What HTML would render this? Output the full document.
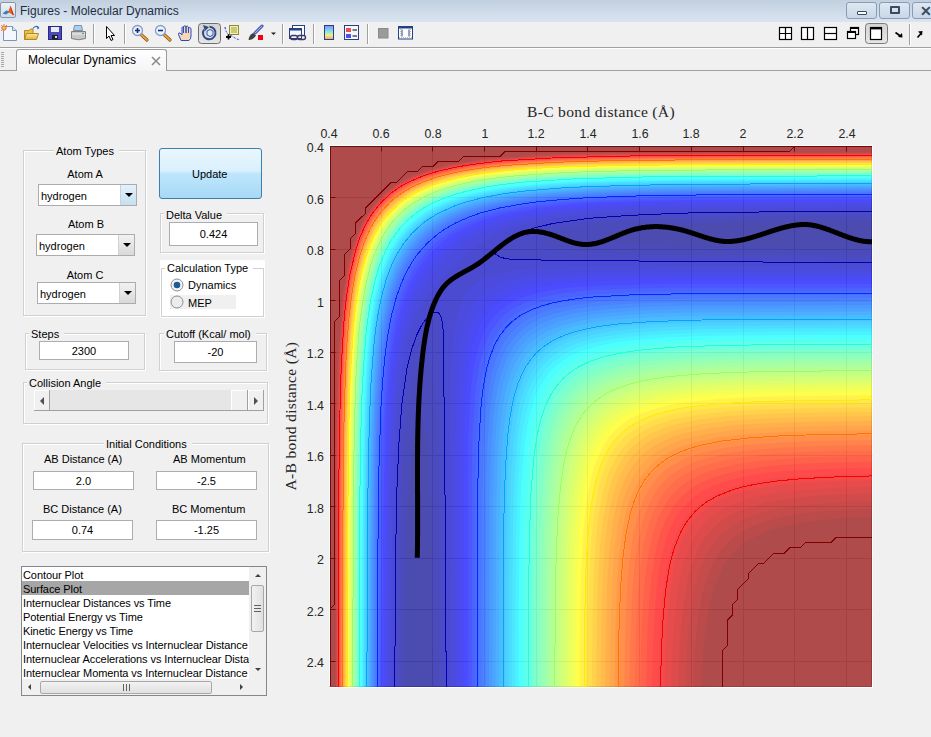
<!DOCTYPE html>
<html><head><meta charset="utf-8">
<style>
*{box-sizing:border-box}
html,body{margin:0;padding:0}
body{width:931px;height:737px;overflow:hidden;background:#f0f0f0;position:relative;font-family:"Liberation Sans",sans-serif;color:#000}
.a{position:absolute}
#title{left:0;top:0;width:931px;height:22px;background:linear-gradient(#c2cfde,#dae5f2)}
#title .t{left:20px;top:4px;font-size:12px;color:#1e2d44;white-space:nowrap}
.wb{position:absolute;top:2px;height:17px;border:1px solid #8a9bb3;border-radius:3px;background:linear-gradient(#dfe8f3,#c8d6e7)}
#tb{left:0;top:22px;width:931px;height:25px;background:#f0f0f0}
.sep{position:absolute;top:24px;width:1px;height:20px;background:#a0a0a0;box-shadow:1px 0 0 #fff}
#tabline1{left:0;top:47px;width:931px;height:1px;background:#a0a0a0}
#tabline1b{left:0;top:48px;width:931px;height:1px;background:#fff}
#tabline2{left:0;top:70px;width:931px;height:1px;background:#a0a0a0}
#tab{left:16px;top:49px;width:151px;height:22px;border:1px solid #9a9a9a;border-bottom:none;border-radius:3px 3px 0 0;background:linear-gradient(#fff,#f4f4f4)}
#tab .t{left:11px;top:3px;font-size:12px}
.lbl{position:absolute;font-size:11px;white-space:nowrap;line-height:13px;margin-top:1px}
.panel{position:absolute;border:1px solid #d0d0d0;box-shadow:inset 1px 1px 0 #fff,1px 1px 0 #fff}
.ptitle{position:absolute;font-size:11px;line-height:13px;background:#f0f0f0;padding:0 5px 0 2px;white-space:nowrap;margin-top:1px}
.edit{position:absolute;background:#fff;border:1px solid #abadb3;font-size:11px;text-align:center;line-height:19px}
.popup{position:absolute;background:#fff;border:1px solid #acacac;font-size:11px;line-height:22px;padding-left:2px}
.popup .btn{position:absolute;right:0;top:0;width:16px;height:100%;background:linear-gradient(#f2f2f2,#d9d9d9);border-left:1px solid #d0d0d0}
.popup .btn:after{content:"";position:absolute;left:4px;top:8px;border-left:4px solid transparent;border-right:4px solid transparent;border-top:4px solid #000}
.tick{position:absolute;font-size:12.4px;color:#262626;white-space:nowrap;line-height:14px}
</style></head><body>
<!-- title bar -->
<div id="title" class="a">
 <div class="a" style="left:0px;top:2px;width:16px;height:16px;border:1px solid #8796a8;border-radius:2px;background:linear-gradient(#eef3f8,#cfdbe8)"></div>
 <svg class="a" style="left:1px;top:4px" width="14" height="13" viewBox="0 0 14 13"><path d="M2 9.5 L5.5 6.5 L7.5 7 L9.5 1.5 L13 11.5 L10.5 10 L8 8.5 Z" fill="#e8601c"/><path d="M9.5 1.5 L13 11.5 L11 10 Z" fill="#b8321a"/><path d="M1.5 9.5 L5.5 6.5 L8 8.5 L5 10.5 Z" fill="#2f7fcf"/></svg>
 <div class="t a">Figures - Molecular Dynamics</div>
 <div class="wb" style="left:846px;width:31px"><div class="a" style="left:10px;top:8px;width:10px;height:4px;border:1px solid #3a4a60;background:#fff;border-radius:1px"></div></div>
 <div class="wb" style="left:879px;width:31px"><div class="a" style="left:10px;top:3px;width:10px;height:8px;border:2px solid #3a4a60;border-radius:1px"></div></div>
 <div class="wb" style="left:912px;width:31px"><div class="a" style="left:7px;top:0px;font-size:14px;font-weight:bold;color:#3a4a60">&#x2715;</div></div>
</div>
<div id="tb" class="a"></div>
<svg class="a" style="left:0;top:22px" width="931" height="25" viewBox="0 22 931 25">
<defs>
<linearGradient id="gFold" x1="0" y1="0" x2="0" y2="1"><stop offset="0" stop-color="#ffe89a"/><stop offset="1" stop-color="#e0b23a"/></linearGradient>
<linearGradient id="gCb" x1="0" y1="0" x2="0" y2="1"><stop offset="0" stop-color="#8a8af0"/><stop offset="0.4" stop-color="#7fe0f0"/><stop offset="0.7" stop-color="#f0f080"/><stop offset="1" stop-color="#f0a070"/></linearGradient>
<linearGradient id="gPress" x1="0" y1="0" x2="0" y2="1"><stop offset="0" stop-color="#d4d4d4"/><stop offset="1" stop-color="#e6e6e6"/></linearGradient>
</defs>
<!-- new -->
<path d="M3.5 26.5H12.5L16.5 30.5V40.5H3.5Z" fill="#f4f8fd" stroke="#7d92c0"/>
<path d="M12.5 26.5V30.5H16.5" fill="#dfe6f3" stroke="#7d92c0"/>
<circle cx="4" cy="28" r="2.2" fill="#f3c24a" stroke="#e8643a" stroke-width="1"/>
<path d="M1 25L2 26M7 25L6 26M1 31L2 30M4 24V25" stroke="#e8643a" stroke-width="0.8"/>
<!-- open -->
<path d="M24.5 30.5H29L30.5 29H33V39.5H24.5Z" fill="#e8c04a" stroke="#b08a20"/>
<path d="M24.5 39.5L26.5 33.5H38.5L36.5 39.5Z" fill="url(#gFold)" stroke="#b08a20"/>
<path d="M33 28.5Q35.5 25 38.5 27.5" fill="none" stroke="#3a66b0" stroke-width="1.2"/>
<path d="M37 26L39.5 28L37.5 29.5Z" fill="#3a66b0"/>
<!-- save -->
<rect x="48.5" y="26.5" width="13" height="13" fill="#4a4ab8" stroke="#2a2a80"/>
<rect x="51" y="27" width="8" height="5" fill="#e8ecf8"/>
<rect x="52" y="35" width="6" height="4.5" fill="#202020"/>
<rect x="55" y="36" width="2" height="2" fill="#ddd"/>
<!-- print -->
<path d="M74.5 25.5H81.5L82.5 30.5H73.5Z" fill="#a8d0f4" stroke="#8090a0"/>
<path d="M71.5 31.5H85.5V38.5Q78.5 41 71.5 38.5Z" fill="#c8c8c8" stroke="#808080"/>
<path d="M72 34H85" stroke="#f0f0f0"/>
<rect x="82" y="33" width="2" height="1" fill="#40b040"/>
<!-- sep -->
<rect x="93" y="24" width="1" height="20" fill="#a0a0a0"/><rect x="94" y="24" width="1" height="20" fill="#fff"/>
<!-- pointer -->
<path d="M106.5 26.5V38.5L109 36L111 40.5L113 39.5L111 35.5H114.5Z" fill="#fff" stroke="#000" stroke-linejoin="round"/>
<rect x="124" y="24" width="1" height="20" fill="#a0a0a0"/><rect x="125" y="24" width="1" height="20" fill="#fff"/>
<!-- zoom in/out -->
<path d="M141 34.5L147 40" stroke="#7a5020" stroke-width="3.2" stroke-linecap="round"/>
<path d="M141 34.5L147 40" stroke="#f0a030" stroke-width="1.8" stroke-linecap="round"/>
<circle cx="137.5" cy="30.5" r="5" fill="#e6f4fc" stroke="#8a9ad0" stroke-width="1.3"/>
<path d="M135 30.5H140M137.5 28V33" stroke="#1a2a70" stroke-width="1.6"/>
<path d="M164 34.5L170 40" stroke="#7a5020" stroke-width="3.2" stroke-linecap="round"/>
<path d="M164 34.5L170 40" stroke="#f0a030" stroke-width="1.8" stroke-linecap="round"/>
<circle cx="160.5" cy="30.5" r="5" fill="#e6f4fc" stroke="#8a9ad0" stroke-width="1.3"/>
<path d="M158 30.5H163" stroke="#1a2a70" stroke-width="1.6"/>
<!-- hand -->
<path d="M181 40.5L178.5 34.5Q178 32.5 180 33L182 35V28Q182 26.5 183.5 27V33V26.5Q185 25 186 26.5V33V26.5Q187.5 25.5 188.5 27V33V28Q190 27 191 28.5V36Q191 39 189 40.5Z" fill="#f6d8b8" stroke="#2a4ac0" stroke-width="1" stroke-linejoin="round"/>
<!-- rotate pressed -->
<rect x="198.5" y="23.5" width="22" height="20" rx="3" fill="url(#gPress)" stroke="#6e6e6e"/>
<path d="M204 29.5A6.3 6.3 0 1 0 209.5 26.7" fill="none" stroke="#2a4a8a" stroke-width="2"/>
<path d="M203 25L209 27L205 31Z" fill="#2a4a8a"/>
<path d="M207 31L210 29.5L213 31V35L210 36.5L207 35Z" fill="#e0e8f8" stroke="#2a4a8a" stroke-width="0.9"/>
<!-- datacursor -->
<rect x="229.5" y="25.5" width="9" height="9" fill="#f4f0a0" stroke="#8a8a40"/>
<path d="M231 28H237M231 30H237M231 32H237" stroke="#8a8a40" stroke-width="0.8"/>
<path d="M225 27Q226 35 232 36Q236 39 240 40" fill="none" stroke="#2020e0" stroke-dasharray="2 1.5"/>
<path d="M226 37H231M228.5 34.5V39.5" stroke="#000" stroke-width="1.8"/>
<!-- brush -->
<path d="M255 33L262 26" stroke="#2a3a9a" stroke-width="3" stroke-linecap="round"/>
<path d="M255 33L262 26" stroke="#90b0f0" stroke-width="1.2" stroke-linecap="round"/>
<path d="M248.5 40Q249 35 253 33L256 35.5Q253 40 248.5 40Z" fill="#404040"/>
<rect x="258" y="35" width="5" height="5" fill="#f00010"/>
<path d="M271 32.5H276L273.5 35Z" fill="#202020"/>
<rect x="282" y="24" width="1" height="20" fill="#a0a0a0"/><rect x="283" y="24" width="1" height="20" fill="#fff"/>
<!-- link -->
<rect x="292.5" y="25.5" width="12" height="10" fill="#fff" stroke="#24408a"/>
<rect x="289.5" y="28.5" width="12" height="10" fill="#f4f6fa" stroke="#24408a"/>
<rect x="290" y="28.5" width="11" height="2" fill="#24408a"/>
<rect x="290.5" y="35.5" width="7" height="4" rx="2" fill="none" stroke="#3a3a60" stroke-width="1.4"/>
<rect x="297.5" y="35.5" width="8" height="4" rx="2" fill="none" stroke="#3a3a60" stroke-width="1.4"/>
<rect x="313" y="24" width="1" height="20" fill="#a0a0a0"/><rect x="314" y="24" width="1" height="20" fill="#fff"/>
<!-- colorbar -->
<rect x="324.5" y="25.5" width="9" height="14" fill="url(#gCb)" stroke="#24408a"/>
<!-- legend -->
<rect x="344.5" y="25.5" width="14" height="14" fill="#f4f6fa" stroke="#24408a"/>
<rect x="346" y="28" width="5" height="4" fill="#e85050"/><rect x="346" y="34" width="5" height="4" fill="#5050e8"/>
<path d="M352.5 30H357M352.5 36H357" stroke="#000" stroke-width="1.2"/>
<rect x="367" y="24" width="1" height="20" fill="#a0a0a0"/><rect x="368" y="24" width="1" height="20" fill="#fff"/>
<!-- grey sq -->
<rect x="378.5" y="28.5" width="9.5" height="9.5" fill="#9a9a9a" stroke="#8a8a8a"/>
<!-- plot tools -->
<rect x="398.5" y="26.5" width="14" height="12.5" fill="#fff" stroke="#24408a"/>
<rect x="399" y="26.5" width="13" height="2" fill="#24408a"/>
<path d="M400.5 29V37M410.5 29V37M399 37.5H412" stroke="#c8c0a0" stroke-dasharray="1 1"/>
<path d="M402 29.5V36.5M409 29.5V36.5" stroke="#24408a"/>
<!-- right side -->
<g fill="#fff" stroke="#000" stroke-width="1.2">
<rect x="779.5" y="27.5" width="12" height="12"/><path d="M785.5 27.5V39.5M779.5 33.5H791.5"/>
<rect x="801.5" y="27.5" width="12" height="12"/><path d="M807.5 27.5V39.5"/>
<rect x="824.5" y="27.5" width="12" height="12"/><path d="M824.5 33.5H836.5"/>
<rect x="850.5" y="27.5" width="8" height="7"/><rect x="847.5" y="31.5" width="8" height="7"/>
</g>
<rect x="850" y="27" width="9" height="2" fill="#000"/><rect x="847" y="31" width="9" height="2" fill="#000"/>
<rect x="865.5" y="23.5" width="22" height="20" rx="3" fill="url(#gPress)" stroke="#7a7a7a"/>
<rect x="870.5" y="27.5" width="11" height="12" fill="#fff" stroke="#000" stroke-width="1.2"/>
<rect x="870" y="27" width="12" height="2.4" fill="#000"/>
<path d="M895.5 32.5L901 36.5" fill="none" stroke="#000" stroke-width="1.6"/><path d="M902.5 37.5L902 33L898 37Z" fill="#000"/>
<rect x="909" y="24" width="1" height="21" fill="#a0a0a0"/><rect x="910" y="24" width="1" height="21" fill="#fff"/>
<path d="M917.5 37.5L921 33.5" fill="none" stroke="#000" stroke-width="1.6"/><path d="M922.5 31L918 31.5L922 35.5Z" fill="#000"/>
</svg>

<div id="tabline1" class="a"></div>
<div id="tabline1b" class="a"></div>
<div id="tabline2" class="a"></div>
<div id="tab" class="a"><div class="t a">Molecular Dynamics</div><svg class="a" style="left:134px;top:6px" width="10" height="10"><path d="M1 1L9 9M9 1L1 9" stroke="#8c8c8c" stroke-width="1.6"/></svg></div>
<div class="a" style="left:1px;top:52px;width:3px;height:16px;background:repeating-linear-gradient(#a8a8a8 0 1px,transparent 1px 2px)"></div>

<!-- Left UI -->
<div class="panel" style="left:23px;top:150px;width:123px;height:166px"></div>
<div class="ptitle" style="left:54px;top:144px">Atom Types</div>
<div class="lbl" style="left:45px;width:80px;text-align:center;top:167px">Atom A</div>
<div class="popup" style="left:38px;top:184px;width:99px;height:22px">hydrogen<div class="btn" style="background:linear-gradient(#e5f1fb,#c4e0f2)"></div></div>
<div class="lbl" style="left:46px;width:80px;text-align:center;top:217px">Atom B</div>
<div class="popup" style="left:36px;top:234px;width:99px;height:22px">hydrogen<div class="btn"></div></div>
<div class="lbl" style="left:45px;width:80px;text-align:center;top:268px">Atom C</div>
<div class="popup" style="left:37px;top:282px;width:99px;height:22px">hydrogen<div class="btn"></div></div>

<div class="a" style="left:159px;top:148px;width:103px;height:51px;border:1px solid #3c7fb1;border-radius:3px;background:linear-gradient(#eaf6fd 0%,#d9f0fc 45%,#bee6fd 50%,#a7d9f5 100%)"></div>
<div class="lbl" style="left:192px;top:167px">Update</div>

<div class="panel" style="left:160px;top:213px;width:104px;height:40px"></div>
<div class="ptitle" style="left:164px;top:208px">Delta Value</div>
<div class="edit" style="left:169px;top:222px;width:89px;height:24px;line-height:23px">0.424</div>

<div class="a" style="left:160px;top:260px;width:105px;height:58px;background:#fff"></div>
<div class="panel" style="left:161px;top:268px;width:103px;height:49px;background:#fff"></div>
<div class="ptitle" style="left:165px;top:261px;background:#fff">Calculation Type</div>
<div class="a" style="left:170px;top:295px;width:66px;height:14px;background:#f0f0f0"></div>
<svg class="a" style="left:170px;top:278px" width="14" height="14"><circle cx="7" cy="7" r="6" fill="#f4f4f4" stroke="#8e8f8f"/><circle cx="7" cy="7" r="3.3" fill="#1d5a9a"/></svg>
<div class="lbl" style="left:188px;top:278px">Dynamics</div>
<svg class="a" style="left:170px;top:295px" width="14" height="14"><circle cx="7" cy="7" r="6" fill="#ececec" stroke="#8e8f8f"/></svg>
<div class="lbl" style="left:188px;top:296px">MEP</div>

<div class="panel" style="left:25px;top:333px;width:120px;height:37px"></div>
<div class="ptitle" style="left:29px;top:327px">Steps</div>
<div class="edit" style="left:39px;top:341px;width:90px;height:19px">2300</div>
<div class="panel" style="left:159px;top:333px;width:108px;height:38px"></div>
<div class="ptitle" style="left:164px;top:327px">Cutoff (Kcal/ mol)</div>
<div class="edit" style="left:174px;top:341px;width:83px;height:22px;line-height:21px">-20</div>

<div class="panel" style="left:23px;top:382px;width:245px;height:42px"></div>
<div class="ptitle" style="left:27px;top:376px">Collision Angle</div>
<div class="a" style="left:34px;top:390px;width:230px;height:21px;background:#e6e6e6;border-bottom:1px solid #a0a0a0"></div>
<div class="a" style="left:34px;top:390px;width:16px;height:21px;background:#f0f0f0;border-right:1px solid #a0a0a0;border-bottom:1px solid #a0a0a0;box-shadow:inset 1px 1px 0 #fff"></div>
<div class="a" style="left:231px;top:390px;width:17px;height:21px;background:#f0f0f0;border-bottom:1px solid #a0a0a0;border-right:1px solid #a0a0a0;box-shadow:inset 1px 1px 0 #fff"></div>
<div class="a" style="left:248px;top:390px;width:16px;height:21px;background:#f0f0f0;border-right:1px solid #a0a0a0;border-bottom:1px solid #a0a0a0;box-shadow:inset 1px 1px 0 #fff"></div>
<div class="a" style="left:40px;top:397px;border-top:4px solid transparent;border-bottom:4px solid transparent;border-right:4px solid #505050"></div>
<div class="a" style="left:254px;top:397px;border-top:4px solid transparent;border-bottom:4px solid transparent;border-left:4px solid #505050"></div>

<div class="panel" style="left:22px;top:443px;width:247px;height:109px"></div>
<div class="ptitle" style="left:104px;top:437px">Initial Conditions</div>
<div class="lbl" style="left:44px;top:452px">AB Distance (A)</div>
<div class="lbl" style="left:173px;top:452px">AB Momentum</div>
<div class="edit" style="left:33px;top:471px;width:101px;height:19px">2.0</div>
<div class="edit" style="left:156px;top:471px;width:101px;height:19px">-2.5</div>
<div class="lbl" style="left:43px;top:502px">BC Distance (A)</div>
<div class="lbl" style="left:172px;top:502px">BC Momentum</div>
<div class="edit" style="left:32px;top:520px;width:101px;height:20px">0.74</div>
<div class="edit" style="left:156px;top:520px;width:101px;height:20px">-1.25</div>

<div class="a" style="left:21px;top:566px;width:246px;height:130px;background:#fff;border:1px solid #828790"></div>
<div class="a" style="left:22px;top:581px;width:227px;height:14px;background:#a6a6a6"></div>
<div class="lbl" style="left:23px;top:567px;line-height:14px;width:226px;height:112px;overflow:hidden;letter-spacing:-0.08px">Contour Plot<br>Surface Plot<br>Internuclear Distances vs Time<br>Potential Energy vs Time<br>Kinetic Energy vs Time<br>Internuclear Velocities vs Internuclear Distance<br>Internuclear Accelerations vs Internuclear Distance<br>Internuclear Momenta vs Internuclear Distance</div>
<div class="a" style="left:249px;top:567px;width:17px;height:112px;background:#f0f0f0"></div>
<div class="a" style="left:22px;top:679px;width:244px;height:16px;background:#f0f0f0"></div>
<div class="a" style="left:251px;top:585px;width:13px;height:47px;border:1px solid #a8a8a8;border-radius:2px;background:linear-gradient(90deg,#f2f2f2,#e0e0e0)"></div>
<div class="a" style="left:254px;top:605px;width:7px;height:7px;border-top:1px solid #606060;border-bottom:1px solid #606060"></div>
<div class="a" style="left:254px;top:608px;width:7px;height:1px;background:#606060"></div>
<div class="a" style="left:255px;top:574px;border-left:3px solid transparent;border-right:3px solid transparent;border-bottom:3px solid #404040"></div>
<div class="a" style="left:255px;top:668px;border-left:3px solid transparent;border-right:3px solid transparent;border-top:3px solid #404040"></div>
<div class="a" style="left:40px;top:681px;width:172px;height:13px;border:1px solid #a8a8a8;border-radius:2px;background:linear-gradient(#f2f2f2,#e0e0e0)"></div>
<div class="a" style="left:123px;top:684px;width:7px;height:7px;border-left:1px solid #606060;border-right:1px solid #606060"></div>
<div class="a" style="left:126px;top:684px;width:1px;height:7px;background:#606060"></div>
<div class="a" style="left:28px;top:684px;border-top:3px solid transparent;border-bottom:3px solid transparent;border-right:3px solid #404040"></div>
<div class="a" style="left:240px;top:684px;border-top:3px solid transparent;border-bottom:3px solid transparent;border-left:3px solid #404040"></div>

<!-- plot -->
<svg class="a" style="left:0;top:0" width="931" height="737">
<rect x="329" y="145" width="544" height="543" fill="#fff"/><path d="M330.5 146.20V686.95M329.36 146.5H872.36M381.5 146.20V686.95M329.36 197.5H872.36M432.5 146.20V686.95M329.36 249.5H872.36M484.5 146.20V686.95M329.36 300.5H872.36M536.5 146.20V686.95M329.36 352.5H872.36M587.5 146.20V686.95M329.36 403.5H872.36M639.5 146.20V686.95M329.36 455.5H872.36M691.5 146.20V686.95M329.36 506.5H872.36M743.5 146.20V686.95M329.36 558.5H872.36M794.5 146.20V686.95M329.36 609.5H872.36M846.5 146.20V686.95M329.36 661.5H872.36" stroke="#d9d9d9" stroke-width="1" fill="none"/><path d="M330.5 146V151.5M330 146.5H335.5M381.5 146V151.5M330 197.5H335.5M432.5 146V151.5M330 249.5H335.5M484.5 146V151.5M330 300.5H335.5M536.5 146V151.5M330 352.5H335.5M587.5 146V151.5M330 403.5H335.5M639.5 146V151.5M330 455.5H335.5M691.5 146V151.5M330 506.5H335.5M743.5 146V151.5M330 558.5H335.5M794.5 146V151.5M330 609.5H335.5M846.5 146V151.5M330 661.5H335.5" stroke="#262626" stroke-width="1" fill="none"/><path d="M330.5 687V146.5H872" fill="none" stroke="#262626"/><path d="M871.5 146.5V686.5H329" fill="none" stroke="#bbbbbb"/>
<defs><clipPath id="pc"><rect x="330" y="146" width="542" height="541"/></clipPath></defs>
<g clip-path="url(#pc)">
<g opacity="0.70"><rect x="329.36" y="146.20" width="543.00" height="540.75" fill="#8f0000"/><path d="M515.5,154.9 520.7,153.8 531.0,152.9 567.2,152.2 872.4,151.8 872.4,525.1 846.5,526.6 825.8,528.6 805.1,531.6 789.6,535.0 774.1,539.9 763.8,544.4 753.4,550.6 743.1,559.3 735.5,568.5 729.2,578.8 724.7,589.1 719.8,604.6 716.4,620.0 713.4,640.6 711.4,661.2 709.8,687.0 335.0,687.0 335.2,424.3 335.9,352.2 337.0,336.8 338.1,331.6 339.7,328.2 341.2,290.4 342.0,285.2 344.9,280.5 346.7,259.5 350.0,254.7 351.3,244.0 353.0,238.9 355.2,236.7 356.8,228.6 360.4,224.8 361.1,223.4 361.9,218.3 365.6,214.7 368.6,208.0 370.7,205.9 372.5,202.8 386.2,189.2 389.3,187.4 391.4,185.3 398.1,182.2 401.8,178.6 406.9,177.8 408.3,177.1 412.1,173.5 420.2,171.9 422.4,169.7 427.6,168.0 438.3,166.8 443.1,163.4 464.2,161.6 469.0,158.8 474.2,158.0 512.1,156.5Z" fill="#8f0000"/><path d="M520.7,156.3 531.0,154.5 541.4,153.8 577.6,152.9 872.4,152.3 872.4,516.5 846.5,517.8 820.6,520.0 800.0,522.8 784.4,526.0 768.9,530.5 758.6,534.7 748.2,540.3 737.9,548.1 728.6,558.2 722.4,567.8 717.2,578.8 712.0,594.2 708.5,609.7 705.3,630.3 702.9,656.0 701.2,687.0 335.5,687.0 335.8,439.8 336.8,362.5 337.7,347.0 339.7,336.0 341.9,295.5 342.6,290.4 344.9,284.2 347.1,264.6 348.5,259.5 350.0,257.2 352.5,244.1 355.2,239.4 358.3,228.6 360.4,226.4 363.5,218.3 365.6,216.2 374.3,202.8 386.2,190.9 399.7,182.2 401.8,180.2 409.9,177.1 412.1,175.0 422.9,171.9 427.6,169.2 440.9,166.8 443.1,165.2 448.3,163.8 468.0,161.6 474.2,159.4 479.3,158.7 519.9,156.5Z" fill="#9f0000"/><path d="M531.0,156.1 556.9,154.2 598.3,153.4 872.4,152.8 872.4,508.4 841.3,509.8 816.0,511.8 794.8,514.6 779.3,517.5 763.8,521.7 749.7,527.3 737.9,534.1 727.6,542.6 718.9,553.0 712.8,563.4 706.9,577.6 702.2,594.2 699.3,609.7 696.5,630.8 694.5,656.0 693.0,687.0 336.0,687.0 336.3,455.2 337.4,372.8 343.0,295.5 344.9,288.2 348.2,264.6 350.0,259.8 353.7,244.1 355.2,241.4 359.8,228.6 365.0,218.3 371.9,208.0 381.1,197.2 391.4,188.6 401.8,181.7 412.1,176.6 425.0,171.9 427.6,170.4 443.5,166.8 448.3,164.9 472.0,161.6 479.3,159.8 484.5,159.2 528.8,156.5Z" fill="#af0000"/><path d="M541.4,156.2 567.2,154.7 619.0,153.8 872.4,153.3 872.4,500.7 841.3,502.0 815.5,503.8 790.1,506.7 774.1,509.6 758.6,513.6 743.1,519.5 732.7,525.1 722.4,533.0 713.5,542.8 706.8,553.0 700.0,568.5 695.4,584.0 691.4,604.6 688.9,625.1 686.9,650.9 685.3,687.0 336.5,687.0 336.9,455.2 337.4,403.7 338.4,372.8 343.3,300.7 349.3,264.6 353.2,249.2 358.5,233.8 365.6,219.2 369.2,213.2 375.9,204.1 381.1,198.4 387.5,192.5 396.6,185.8 402.7,182.2 417.3,175.2 432.8,169.9 448.3,166.0 484.5,160.1 539.1,156.5Z" fill="#bf0000"/><path d="M551.7,156.5 582.8,155.1 634.5,154.3 872.4,153.8 872.4,493.4 836.2,494.8 810.3,496.5 789.6,498.7 768.9,502.1 750.7,506.7 737.1,511.8 727.6,516.8 722.4,520.2 713.8,527.3 704.9,537.6 698.6,547.9 692.2,563.4 687.9,578.8 684.1,599.4 681.1,625.1 679.4,650.9 678.0,687.0 337.0,687.0 337.5,460.4 338.0,408.8 339.0,377.9 341.3,336.8 344.2,300.7 348.9,269.8 354.0,249.2 359.3,233.8 365.6,220.7 370.1,213.1 375.9,205.3 381.1,199.5 388.7,192.5 396.6,186.7 404.2,182.2 417.3,176.1 432.8,170.7 453.5,165.7 484.5,161.0 494.8,159.9 551.2,156.5Z" fill="#cf0000"/><path d="M567.2,156.4 598.3,155.4 650.0,154.8 872.4,154.3 872.4,486.5 836.2,487.7 805.1,489.6 779.3,492.4 758.6,496.0 743.1,500.2 727.6,506.3 717.2,512.2 710.9,517.0 705.3,522.1 696.9,532.5 691.0,542.8 684.8,558.2 680.7,573.7 677.0,594.2 674.2,620.0 672.3,650.9 671.1,687.0 337.5,687.0 338.1,450.1 338.9,403.7 340.7,357.3 343.8,311.0 348.8,274.9 354.8,249.2 360.2,233.8 365.6,222.3 370.7,213.5 375.9,206.5 381.1,200.6 389.9,192.5 396.9,187.4 405.7,182.3 417.3,176.9 432.8,171.5 443.1,168.9 453.5,166.5 474.2,163.2 500.0,160.1 531.0,158.1 566.0,156.5Z" fill="#df0000"/><path d="M587.9,156.4 675.8,155.2 872.4,154.9 872.4,479.9 836.2,480.9 805.1,482.6 779.3,485.1 758.6,488.2 743.1,491.7 727.6,496.9 717.6,501.6 712.0,504.9 701.7,512.8 696.5,518.0 691.4,524.6 683.8,537.6 677.9,553.0 673.9,568.5 670.3,589.1 667.6,614.9 665.7,645.8 664.4,687.0 338.0,687.0 338.7,450.1 339.9,393.4 341.8,347.0 344.4,311.0 349.4,274.9 355.2,250.2 359.0,238.9 363.3,228.6 365.7,223.4 371.9,213.1 380.0,202.8 386.2,196.6 396.6,188.6 406.9,182.4 417.3,177.7 427.6,173.9 443.1,169.5 458.6,166.2 494.8,161.2 536.2,158.3 584.8,156.5Z" fill="#ef0000"/><path d="M613.8,156.4 696.5,155.7 872.4,155.4 872.4,473.5 831.0,474.6 800.0,476.3 768.9,479.3 748.2,482.8 732.7,486.7 717.2,492.4 709.4,496.4 701.7,501.4 691.4,510.6 686.2,516.7 682.5,522.1 675.8,535.1 670.7,549.8 666.3,568.5 663.2,589.1 660.8,614.9 659.2,645.8 658.0,687.0 338.6,687.0 339.3,455.2 340.5,393.4 342.4,347.0 345.1,311.0 350.1,274.9 356.3,249.2 360.4,237.1 365.6,225.4 370.7,216.3 376.6,208.0 386.2,197.7 392.3,192.5 401.8,186.2 412.1,180.8 422.4,176.4 436.2,171.9 463.8,166.0 500.0,161.3 546.6,158.4 610.9,156.5Z" fill="#ff0000"/><path d="M655.2,156.5 872.4,155.9 872.4,467.4 831.0,468.4 794.8,470.2 768.9,472.6 748.2,475.6 727.6,480.4 712.0,486.0 701.7,491.3 694.3,496.4 688.3,501.5 679.3,511.8 675.8,517.1 670.7,527.1 664.9,542.8 660.3,562.2 657.1,584.0 654.7,609.7 652.9,645.8 651.9,687.0 339.1,687.0 339.2,563.4 339.7,470.6 340.8,403.7 342.7,352.2 345.7,311.0 350.0,278.7 355.4,254.3 360.4,239.0 364.8,228.6 370.4,218.3 375.9,210.2 382.1,202.8 391.4,194.3 401.2,187.4 410.6,182.2 422.4,177.1 432.8,173.7 443.1,170.9 458.6,167.5 494.8,162.5 531.0,159.8 582.8,157.7 653.1,156.5Z" fill="#ff1000"/><path d="M768.9,156.5 872.4,156.4 872.4,461.5 831.0,462.4 794.8,464.1 768.9,466.1 743.1,469.7 722.4,474.4 706.9,479.9 694.9,486.1 687.6,491.2 681.7,496.4 673.0,506.7 665.5,519.9 660.3,533.0 655.1,553.0 651.2,578.8 648.9,604.6 647.1,640.6 646.0,687.0 339.6,687.0 340.1,486.1 341.9,383.1 343.5,347.0 345.8,316.1 349.6,285.2 353.6,264.6 359.4,244.0 365.6,228.8 370.7,219.2 374.7,213.1 383.2,202.8 395.0,192.6 406.9,185.0 412.3,182.2 424.7,177.1 441.4,171.9 463.8,167.2 484.5,164.3 510.4,161.6 541.4,159.8 624.1,157.4 765.9,156.5Z" fill="#ff2000"/><path d="M520.7,161.5 572.4,159.1 634.5,157.9 872.4,156.9 872.4,455.9 825.8,456.8 789.6,458.4 763.8,460.5 737.9,464.0 717.2,468.7 701.7,474.1 688.6,480.9 681.3,486.1 675.6,491.2 670.7,496.7 665.5,503.9 658.6,517.0 653.2,532.5 648.5,553.0 644.9,578.8 642.9,604.6 641.3,640.6 640.3,687.0 340.2,687.0 340.8,470.6 341.8,408.8 343.3,362.5 345.5,326.5 349.5,290.4 354.3,264.6 360.1,244.0 365.6,230.6 369.2,223.4 375.7,213.1 379.7,208.0 384.4,202.8 391.4,196.3 396.6,192.3 406.9,185.9 414.1,182.2 426.8,177.1 448.3,171.0 463.8,167.9 479.3,165.5 518.4,161.6Z" fill="#ff3000"/><path d="M531.0,161.4 582.8,159.4 644.8,158.3 872.4,157.5 872.4,450.4 820.6,451.4 784.4,453.0 757.0,455.2 732.7,458.5 712.0,463.2 696.5,468.6 682.7,475.8 675.8,480.7 670.7,485.3 665.2,491.2 660.3,498.1 653.1,511.9 647.6,527.3 643.0,547.9 639.6,572.1 637.4,599.4 635.8,635.5 634.8,687.0 340.7,687.0 341.4,470.6 342.4,408.8 343.9,362.5 346.1,326.5 350.0,290.8 355.2,263.5 360.9,244.0 365.6,232.4 370.1,223.4 375.9,214.2 381.1,207.6 386.2,202.1 396.6,193.3 405.8,187.4 412.1,184.1 422.4,179.6 432.8,175.9 447.1,172.0 458.6,169.5 474.5,166.8 489.7,164.9 527.4,161.6Z" fill="#ff4000"/><path d="M541.4,161.5 587.9,159.9 650.0,158.8 872.4,158.1 872.4,445.1 820.6,446.0 784.4,447.5 753.4,449.8 727.6,453.3 706.9,457.9 691.4,463.2 677.2,470.6 670.7,475.3 665.5,479.9 660.3,485.5 656.1,491.2 650.1,501.5 647.7,506.7 642.3,522.1 637.7,542.8 634.2,568.5 631.9,599.4 630.4,635.5 629.5,687.0 341.3,687.0 342.0,470.6 343.0,408.8 344.5,362.5 346.8,326.5 350.0,295.4 355.2,266.5 361.7,244.0 365.6,234.3 370.7,223.9 375.9,215.7 381.8,208.0 391.4,198.5 399.1,192.5 407.4,187.4 417.3,182.5 427.6,178.4 438.0,175.1 450.2,171.9 463.8,169.3 479.2,166.8 494.8,165.0 537.8,161.6Z" fill="#ff5000"/><path d="M551.7,161.6 598.3,160.2 660.3,159.3 872.4,158.7 872.4,439.9 820.6,440.8 779.3,442.4 748.2,444.7 722.4,448.2 701.7,452.8 686.2,458.2 681.0,460.5 670.7,466.5 665.0,470.6 659.4,475.8 654.8,480.9 650.0,487.5 642.6,501.5 637.2,517.0 632.6,537.6 629.1,563.4 626.8,594.2 625.2,635.5 624.3,687.0 341.9,687.0 342.6,470.6 343.5,408.8 345.1,362.5 347.9,321.3 351.5,290.4 356.4,264.6 360.4,250.2 364.5,238.9 369.2,228.6 375.1,218.3 381.1,210.2 386.2,204.5 393.7,197.7 400.6,192.5 409.1,187.4 419.8,182.2 432.8,177.4 443.1,174.5 453.5,171.9 474.2,168.2 505.2,164.6 550.2,161.6Z" fill="#ff6000"/><path d="M567.2,161.6 670.7,159.8 872.4,159.3 872.4,435.0 820.6,435.7 779.3,437.2 748.2,439.3 722.4,442.4 701.7,446.5 691.4,449.4 681.0,453.3 667.4,460.4 660.3,465.4 654.6,470.6 649.9,475.8 644.8,482.9 637.7,496.4 633.8,506.7 630.9,517.0 626.8,537.6 623.6,563.4 621.5,594.2 620.1,635.5 619.3,687.0 342.5,687.0 343.2,470.6 344.1,408.8 345.7,362.5 348.5,321.3 352.2,290.4 355.2,273.1 358.5,259.5 361.6,249.2 365.6,238.3 370.7,227.3 375.9,218.6 381.1,211.6 389.1,202.8 395.0,197.7 402.1,192.5 410.8,187.4 422.4,182.0 436.4,177.1 448.3,173.9 458.6,171.6 479.3,168.2 515.5,164.4 565.4,161.6Z" fill="#ff7000"/><path d="M587.9,161.6 686.2,160.3 872.4,159.8 872.4,430.1 815.5,430.9 774.1,432.4 743.1,434.5 717.2,437.6 696.5,441.7 686.2,444.7 675.8,448.6 663.0,455.2 655.8,460.3 650.0,465.5 644.8,471.3 639.6,478.5 633.0,491.2 629.1,501.5 626.1,511.8 622.0,532.5 618.8,558.2 616.7,589.1 615.3,630.3 614.5,687.0 343.1,687.0 343.9,455.2 344.9,398.5 346.9,352.2 350.0,311.7 354.6,280.1 360.4,255.4 365.6,240.4 368.5,233.8 371.0,228.6 377.2,218.3 385.3,208.0 391.4,201.9 401.8,193.8 412.1,187.7 422.4,182.9 432.8,179.1 443.1,176.0 460.4,171.9 494.8,166.9 536.2,163.7 585.0,161.6Z" fill="#ff8000"/><path d="M613.8,161.6 706.9,160.8 872.4,160.4 872.4,425.4 815.5,426.1 774.1,427.4 737.9,429.8 712.0,433.0 691.4,437.1 681.0,440.1 670.7,444.0 659.0,450.0 651.6,455.2 645.7,460.3 637.0,470.6 633.7,475.8 628.4,486.1 624.5,496.4 621.5,506.7 617.3,527.3 614.1,553.0 611.8,589.1 610.5,630.3 609.7,687.0 343.6,687.0 344.0,517.0 344.7,439.7 345.9,388.2 348.2,341.9 351.5,305.9 355.3,280.1 361.5,254.3 365.6,242.6 370.7,231.0 375.9,221.8 381.1,214.4 386.5,208.0 396.6,198.7 405.3,192.6 412.1,188.6 427.6,181.7 441.8,177.1 453.5,174.2 479.3,169.6 510.4,166.1 556.9,163.3 612.5,161.6Z" fill="#ff8f00"/><path d="M660.3,161.6 872.4,161.0 872.4,420.8 815.5,421.5 774.1,422.7 737.9,424.8 712.0,427.7 691.4,431.4 681.0,434.1 670.7,437.6 655.2,445.0 647.7,450.1 641.7,455.2 632.8,465.5 629.3,470.7 624.0,480.9 620.1,491.2 617.0,501.5 612.8,522.1 609.6,547.9 607.2,584.0 605.9,625.2 605.1,687.0 344.2,687.0 344.5,527.3 345.3,439.8 347.2,372.8 350.4,321.3 354.3,290.4 358.3,269.8 364.1,249.2 370.7,232.8 375.9,223.4 379.3,218.3 387.7,208.0 399.3,197.7 406.9,192.5 416.4,187.4 428.4,182.2 448.3,176.2 469.0,171.8 500.0,167.7 525.9,165.6 562.1,163.7 658.2,161.6Z" fill="#ff9f00"/><path d="M810.3,161.6 872.4,161.6 872.4,416.3 810.3,417.0 763.8,418.4 727.6,420.9 701.7,424.1 677.0,429.4 660.3,435.5 651.9,439.8 644.8,444.3 634.5,453.4 629.3,459.5 625.3,465.5 617.7,480.9 614.1,491.2 611.4,501.5 607.6,522.1 604.7,547.9 602.5,584.0 601.3,625.1 600.6,687.0 344.8,687.0 345.6,470.6 346.6,408.9 348.3,362.5 350.7,326.5 355.0,290.4 360.4,264.1 366.8,244.0 374.0,228.6 381.1,217.4 391.4,205.6 401.8,197.0 408.7,192.5 417.3,187.9 430.9,182.2 447.7,177.1 469.0,172.6 489.7,169.6 517.5,166.8 577.6,163.8 665.5,162.2 806.3,161.6Z" fill="#ffaf00"/><path d="M531.0,166.5 582.8,164.3 644.8,163.1 872.4,162.2 872.4,411.9 810.3,412.6 763.8,413.9 727.6,416.1 701.7,419.0 675.8,424.2 660.3,429.2 650.0,434.0 644.8,437.0 634.2,444.9 629.1,450.1 624.1,456.2 618.3,465.5 613.8,475.2 608.5,491.2 603.4,516.1 600.4,542.8 598.1,578.8 596.8,625.1 596.2,687.0 345.5,687.0 346.2,475.8 347.2,414.0 348.7,367.6 350.9,331.6 354.9,295.5 359.8,269.8 365.6,249.7 370.7,236.9 375.0,228.6 381.1,218.9 385.6,213.1 391.4,206.9 401.8,198.2 410.4,192.5 417.3,188.9 433.3,182.2 448.3,177.8 458.6,175.4 484.5,171.0 526.8,166.8Z" fill="#ffbf00"/><path d="M541.4,166.6 587.9,164.8 650.0,163.7 872.4,162.9 872.4,407.6 810.3,408.2 763.8,409.4 727.6,411.5 696.5,414.9 674.3,419.1 655.2,425.3 646.1,429.4 639.6,433.2 630.9,439.8 625.5,444.9 617.5,455.2 613.8,461.6 608.6,473.1 603.1,491.2 598.4,517.0 595.7,542.8 593.7,578.8 592.5,625.1 591.9,687.0 346.1,687.0 346.9,470.6 347.9,408.9 349.6,362.5 351.7,331.6 355.2,298.7 360.4,270.7 366.7,249.2 370.7,239.0 375.9,228.7 381.1,220.6 386.8,213.1 396.6,203.4 404.1,197.7 412.2,192.5 422.4,187.4 432.8,183.4 443.1,180.1 454.4,177.1 469.0,174.2 482.5,171.9 500.0,169.9 537.7,166.8Z" fill="#ffcf00"/><path d="M551.7,166.7 598.3,165.2 660.3,164.3 872.4,163.6 872.4,403.4 805.1,404.1 758.6,405.3 722.4,407.4 696.5,410.1 674.1,414.0 655.2,419.4 639.6,426.4 629.3,433.3 624.1,437.8 619.0,443.3 613.9,450.1 608.6,459.2 605.7,465.5 602.0,475.8 599.1,486.1 595.1,506.7 591.6,537.6 589.5,573.7 588.3,620.0 587.7,687.0 346.8,687.0 347.5,475.8 348.5,414.0 350.0,366.5 352.8,326.5 356.5,295.5 361.5,269.8 365.6,255.1 369.6,244.0 374.3,233.8 380.3,223.4 386.2,215.4 391.4,209.6 398.8,202.8 405.7,197.7 414.2,192.5 424.8,187.4 438.0,182.5 448.3,179.5 458.6,177.0 474.2,174.1 505.2,170.1 550.6,166.8Z" fill="#ffdf00"/><path d="M567.2,166.8 670.7,164.8 872.4,164.2 872.4,399.3 805.1,399.9 758.6,401.0 722.4,402.9 691.4,406.1 670.7,409.7 660.3,412.3 650.0,415.7 639.6,420.1 632.1,424.3 624.8,429.4 619.0,434.6 613.8,440.4 608.6,447.7 604.4,455.2 600.0,465.5 596.6,475.8 594.0,486.1 590.3,506.7 587.1,537.6 585.3,573.7 584.1,620.0 583.5,687.0 347.5,687.0 348.2,470.6 349.2,408.9 350.7,367.6 353.6,326.5 357.3,295.5 360.4,278.1 363.7,264.6 370.7,243.6 375.9,232.6 381.1,224.0 386.2,216.9 394.5,208.0 400.4,202.8 407.4,197.7 416.2,192.5 427.6,187.2 441.6,182.2 453.5,179.1 463.8,176.7 484.5,173.3 520.7,169.4 566.6,166.8Z" fill="#ffef00"/><path d="M587.9,166.8 686.2,165.4 872.4,164.9 872.4,395.3 800.0,395.9 753.4,397.0 717.2,399.0 686.2,402.2 670.7,404.8 660.3,407.2 650.0,410.2 639.9,414.0 629.8,419.1 624.1,422.8 613.8,431.7 608.6,437.8 603.7,444.9 596.3,460.4 592.8,470.6 590.2,480.9 585.7,506.7 582.8,537.6 581.1,573.7 580.0,620.0 579.5,687.0 348.1,687.0 348.4,532.5 349.2,444.9 350.4,393.4 352.7,347.0 355.3,316.1 359.8,285.2 365.6,261.0 371.6,244.1 375.9,234.7 381.1,225.8 386.2,218.5 390.8,213.2 401.9,202.8 409.3,197.7 418.2,192.5 429.6,187.4 438.0,184.4 458.6,178.7 484.5,174.1 510.4,171.0 546.6,168.5 587.6,166.8Z" fill="#ffff00"/><path d="M619.0,166.8 712.0,165.9 872.4,165.6 872.4,391.3 800.0,391.9 753.4,392.9 717.2,394.7 686.2,397.7 660.3,402.2 650.0,404.9 639.6,408.5 629.3,413.2 624.1,416.2 613.3,424.3 608.2,429.4 603.4,435.3 597.5,444.9 593.1,454.3 587.7,470.6 582.6,496.4 579.3,527.3 577.3,563.4 576.1,614.9 575.5,687.0 348.8,687.0 349.1,532.5 349.9,439.8 351.7,377.9 354.6,331.6 357.4,305.9 360.6,285.2 365.6,264.1 372.6,244.0 380.5,228.6 387.7,218.3 397.4,208.0 403.7,202.8 411.1,197.7 420.4,192.5 427.6,189.3 443.1,183.7 458.6,179.6 479.3,175.6 508.2,171.9 536.2,169.8 572.4,168.1 617.8,166.8Z" fill="#efff10"/><path d="M675.8,166.8 872.4,166.2 872.4,387.4 800.0,387.9 753.4,388.9 717.2,390.6 685.2,393.4 660.3,397.4 639.6,403.1 624.1,409.9 617.5,414.0 608.6,421.1 603.4,426.4 597.3,434.6 593.1,441.8 589.3,450.1 585.6,460.4 582.8,470.6 578.1,496.4 575.1,527.3 573.3,563.4 572.1,614.9 571.6,687.0 349.5,687.0 349.9,501.5 351.4,408.8 353.0,367.6 354.9,336.8 357.6,311.0 360.5,290.4 365.6,267.5 370.7,251.2 376.0,238.9 381.1,229.5 385.1,223.4 393.7,213.1 405.4,202.8 417.3,195.3 432.8,188.2 451.2,182.2 469.0,178.3 489.7,174.9 516.6,171.9 546.6,170.0 582.8,168.4 671.8,166.8Z" fill="#dfff20"/><path d="M531.0,171.6 582.8,169.2 644.8,167.9 872.4,166.9 872.4,383.6 800.0,384.1 748.2,385.1 712.0,386.8 681.0,389.6 655.2,393.8 644.8,396.4 634.5,399.7 624.1,404.1 615.6,408.8 608.6,413.8 603.4,418.4 598.3,424.1 594.3,429.4 591.1,434.6 586.0,444.9 582.1,455.2 579.2,465.5 574.5,491.2 571.3,522.1 569.5,558.2 568.3,609.7 567.8,687.0 350.1,687.0 350.9,480.9 351.9,419.1 353.4,372.8 355.7,336.8 359.8,300.7 364.6,275.0 370.6,254.3 375.9,241.4 379.8,233.8 386.2,223.6 390.4,218.3 401.8,207.0 407.1,202.8 417.3,196.5 424.9,192.5 437.6,187.4 458.6,181.3 484.5,176.5 526.2,171.9Z" fill="#cfff30"/><path d="M541.4,171.7 587.9,169.8 650.0,168.5 872.4,167.7 872.4,379.9 789.6,380.4 732.7,381.8 691.4,384.3 660.3,388.3 644.8,391.6 634.5,394.6 624.1,398.5 613.9,403.7 606.3,408.8 600.3,414.0 593.1,422.0 588.0,429.4 580.6,444.9 575.8,460.4 571.6,480.9 568.5,506.7 566.4,537.6 565.1,573.7 564.0,687.0 350.9,687.0 351.7,475.8 352.8,414.0 354.4,367.6 357.0,331.6 360.4,301.9 365.6,274.8 371.7,254.3 375.9,243.8 381.0,233.7 386.2,225.5 391.4,218.8 396.6,213.1 406.9,204.4 417.1,197.7 422.4,194.9 432.8,190.3 443.1,186.6 458.5,182.2 469.0,180.1 494.8,175.9 537.4,171.9Z" fill="#bfff40"/><path d="M551.7,171.9 598.3,170.2 660.3,169.2 872.4,168.4 872.4,376.2 789.6,376.7 732.7,377.9 691.4,380.3 660.3,383.9 644.8,386.9 634.5,389.7 624.1,393.2 613.8,397.9 604.4,403.7 598.0,408.8 592.8,414.0 585.1,424.3 582.1,429.4 577.6,439.2 572.4,455.2 568.1,475.8 564.9,501.5 562.7,532.5 561.4,568.5 560.3,687.0 351.7,687.0 352.4,475.8 353.5,414.0 355.2,366.9 357.8,331.6 361.5,300.7 366.5,274.9 370.7,260.0 374.7,249.2 379.5,238.9 385.5,228.6 391.4,220.6 396.6,214.8 404.0,208.0 410.9,202.8 419.4,197.7 429.9,192.5 443.1,187.6 453.5,184.6 463.8,182.0 479.3,179.1 510.4,175.0 551.0,171.9Z" fill="#afff50"/><path d="M572.4,171.8 675.8,169.8 872.4,169.2 872.4,372.5 789.6,373.0 737.9,374.0 696.5,375.9 665.5,379.0 639.6,383.6 629.3,386.4 619.0,390.1 611.6,393.4 603.4,398.1 595.9,403.7 590.5,408.8 582.8,418.4 579.2,424.3 572.3,439.8 566.6,460.4 562.4,486.1 559.7,517.0 557.9,558.2 557.0,609.7 556.6,687.0 352.4,687.0 352.9,517.0 354.0,424.3 355.2,383.8 357.4,347.0 360.4,314.8 364.2,290.4 370.3,264.6 375.8,249.2 383.6,233.8 391.4,222.3 401.8,211.5 412.9,202.8 421.6,197.7 432.5,192.5 448.3,187.0 469.0,181.8 498.6,177.1 531.0,174.1 567.9,171.9Z" fill="#9fff60"/><path d="M593.1,171.9 691.4,170.4 872.4,169.9 872.4,368.9 789.6,369.3 737.9,370.3 696.5,372.1 665.5,374.9 639.6,379.1 629.3,381.7 619.0,385.0 608.6,389.4 601.4,393.4 594.0,398.5 588.2,403.7 582.8,409.8 577.6,417.1 573.6,424.3 569.2,434.6 565.8,444.9 563.2,455.2 559.0,480.9 556.2,511.8 554.4,553.0 553.4,604.6 553.0,687.0 353.2,687.0 354.2,455.2 355.5,398.5 358.2,347.0 360.5,321.3 365.1,290.4 369.9,269.8 374.9,254.3 381.1,240.5 388.2,228.6 396.6,218.1 407.7,208.0 415.0,202.8 422.4,198.5 435.4,192.6 450.4,187.4 471.7,182.2 494.8,178.5 520.7,175.7 551.7,173.6 590.5,171.9Z" fill="#8fff70"/><path d="M624.1,171.9 717.2,171.0 872.4,170.7 872.4,365.3 789.6,365.7 737.9,366.6 696.5,368.3 665.5,370.8 639.6,374.8 619.0,380.1 608.6,384.1 600.3,388.2 593.1,392.9 586.2,398.5 581.2,403.7 573.6,414.0 570.7,419.1 566.1,429.4 562.6,439.8 560.0,450.1 555.6,475.8 552.7,506.7 550.8,547.9 549.8,604.6 549.4,687.0 354.0,687.0 354.4,517.0 355.6,424.3 357.0,383.1 358.7,352.2 360.4,330.7 363.5,305.9 367.2,285.2 372.5,264.6 378.2,249.2 386.2,233.8 393.6,223.4 403.4,213.1 409.7,208.0 417.2,202.8 426.5,197.7 438.3,192.5 454.1,187.4 476.7,182.2 500.0,178.8 520.7,176.6 551.7,174.5 624.1,171.9Z" fill="#80ff80"/><path d="M691.4,171.9 872.4,171.5 872.4,361.8 789.6,362.2 732.7,363.1 691.4,364.8 660.3,367.5 634.5,371.5 613.8,377.1 598.3,383.8 591.0,388.2 582.8,394.8 577.6,400.1 571.0,408.9 567.2,415.3 563.1,424.3 559.5,434.6 556.7,444.9 552.2,470.6 549.2,501.5 547.3,542.8 546.3,599.4 545.9,687.0 354.7,687.0 355.3,496.4 356.1,439.8 357.4,393.4 359.5,352.2 361.8,326.5 365.6,298.5 370.7,274.3 375.9,257.9 381.1,245.6 387.6,233.8 396.6,221.8 406.9,211.7 419.5,202.8 432.8,196.1 448.3,190.3 458.6,187.2 482.3,182.2 505.2,179.1 525.9,177.0 556.9,175.0 593.1,173.6 690.0,171.9Z" fill="#70ff8f"/><path d="M536.2,177.1 587.9,174.6 650.0,173.3 872.4,172.3 872.4,358.3 779.3,358.7 722.4,359.8 675.8,362.1 644.8,365.5 632.5,367.6 619.0,370.8 608.6,374.1 598.3,378.4 589.9,383.1 582.6,388.2 576.9,393.4 572.4,398.4 567.2,405.6 560.2,419.1 556.5,429.4 553.6,439.8 549.6,460.4 546.6,486.1 544.6,517.0 543.3,558.2 542.4,687.0 355.5,687.0 356.3,480.9 357.3,424.3 358.9,377.9 361.2,341.9 365.4,305.9 370.4,280.1 375.9,261.1 381.1,248.3 385.9,238.9 391.4,230.3 396.6,223.6 407.1,213.1 413.8,208.0 422.4,202.5 431.9,197.7 443.1,193.2 463.8,187.0 494.8,181.3 536.0,177.1Z" fill="#60ff9f"/><path d="M551.7,177.0 598.3,175.2 660.3,174.0 872.4,173.1 872.4,354.9 784.4,355.2 727.6,356.1 686.2,357.7 650.0,360.9 624.1,365.2 613.8,367.8 603.4,371.2 587.9,378.6 581.2,383.1 572.4,390.9 567.2,397.0 562.1,404.8 557.4,414.0 553.5,424.3 548.2,444.9 544.3,470.6 541.8,501.5 540.1,542.8 539.2,599.4 538.9,687.0 356.4,687.0 356.8,527.3 357.9,434.6 359.3,388.2 361.0,357.3 363.7,326.5 367.3,300.7 371.5,280.1 377.8,259.5 381.1,251.2 386.2,240.8 394.3,228.6 403.4,218.3 416.0,208.0 424.4,202.8 432.8,198.6 448.3,192.5 466.8,187.4 494.8,182.3 520.7,179.4 549.9,177.1Z" fill="#50ffaf"/><path d="M572.4,176.9 619.0,175.5 675.8,174.7 872.4,174.0 872.4,351.5 779.3,351.8 722.4,352.7 681.0,354.4 646.9,357.4 634.5,359.1 619.0,362.1 608.6,364.8 598.3,368.4 588.5,372.8 582.8,376.1 573.4,383.1 568.1,388.2 562.1,395.8 557.2,403.7 550.5,419.1 545.0,439.8 541.0,465.5 538.1,501.5 536.6,542.8 535.8,599.4 535.5,687.0 357.3,687.0 358.2,470.6 359.5,408.8 361.3,367.6 363.2,341.9 365.9,316.1 370.7,288.0 375.5,269.8 381.0,254.3 386.2,243.4 391.4,234.8 395.9,228.6 405.3,218.3 417.3,208.7 427.6,202.5 443.1,195.7 452.1,192.5 463.8,189.3 479.3,185.9 505.2,181.9 536.2,179.0 567.4,177.1Z" fill="#40ffbf"/><path d="M593.1,177.0 691.4,175.4 872.4,174.9 872.4,348.1 727.6,349.1 681.0,350.8 650.0,353.2 621.5,357.3 608.6,360.4 598.3,363.6 588.4,367.6 582.8,370.6 572.4,377.5 567.2,382.1 561.6,388.2 556.9,394.9 552.0,403.7 547.7,414.0 544.4,424.3 541.9,434.6 537.8,460.4 535.1,491.2 533.2,537.6 532.4,594.2 532.1,687.0 358.2,687.0 358.6,527.3 359.7,434.6 361.7,378.0 365.6,327.1 369.4,300.7 373.8,280.1 378.5,264.6 384.8,249.2 391.4,237.2 396.6,229.9 401.8,223.8 412.1,214.2 420.8,208.0 429.8,202.8 443.1,196.9 458.6,191.8 479.3,187.0 505.2,183.0 525.9,180.8 556.9,178.6 591.1,177.1Z" fill="#30ffcf"/><path d="M629.3,177.1 717.2,176.1 872.4,175.8 872.4,344.7 779.3,345.0 722.4,345.8 681.0,347.2 644.8,350.0 619.0,353.8 598.3,359.0 587.9,362.9 578.4,367.6 570.6,372.8 564.5,378.0 556.9,386.4 552.2,393.4 544.8,408.8 541.4,419.2 538.9,429.4 534.6,455.2 531.5,491.2 529.9,532.5 529.0,594.2 528.7,687.0 359.0,687.0 359.6,511.8 361.0,419.1 362.6,377.9 364.7,347.0 367.4,321.3 370.7,299.2 375.9,276.7 379.8,264.6 386.2,249.2 392.0,238.9 399.5,228.6 409.4,218.3 422.4,208.5 432.8,202.8 444.6,197.7 460.4,192.6 483.0,187.4 505.2,184.1 525.9,181.8 556.9,179.6 627.1,177.1Z" fill="#20ffdf"/><path d="M706.9,177.1 872.4,176.6 872.4,341.4 722.4,342.3 681.0,343.7 644.8,346.2 629.3,348.1 613.8,350.7 593.1,356.1 577.6,362.7 569.5,367.6 562.1,373.5 556.9,378.8 549.8,388.2 546.6,393.8 542.1,403.7 538.5,414.0 535.8,424.3 532.8,439.8 530.8,455.2 528.2,486.1 526.4,532.5 525.6,589.1 525.3,687.0 359.9,687.0 360.6,491.2 361.7,429.4 363.4,383.1 365.7,347.0 369.9,311.0 374.9,285.2 381.0,264.6 386.2,252.2 393.7,238.9 401.8,228.0 411.5,218.3 422.4,210.3 435.8,202.8 448.2,197.7 465.0,192.5 484.5,188.3 500.0,185.8 525.9,182.8 546.6,181.2 613.8,178.4 703.0,177.1Z" fill="#10ffef"/><path d="M546.6,182.2 593.1,180.0 655.2,178.6 872.4,177.6 872.4,338.1 779.3,338.3 717.2,339.0 670.7,340.7 639.6,343.0 611.6,347.0 598.3,350.1 587.9,353.3 578.1,357.3 572.4,360.3 562.1,367.2 556.9,371.8 551.3,377.9 546.6,384.5 541.6,393.4 537.3,403.7 534.1,414.0 531.0,427.3 527.0,455.2 524.6,486.1 523.0,532.5 522.2,594.2 522.0,687.0 360.9,687.0 361.7,486.1 362.7,429.4 364.4,383.1 365.9,357.3 368.9,326.5 371.0,311.0 375.9,286.3 381.1,268.6 386.8,254.3 391.4,245.3 395.4,238.9 403.3,228.6 413.9,218.3 427.6,208.7 439.1,202.8 453.5,197.3 470.1,192.5 494.8,187.7 520.7,184.5 545.9,182.2Z" fill="#00ffff"/><path d="M567.2,182.1 613.8,180.4 670.7,179.4 872.4,178.6 872.4,334.8 774.1,335.0 712.0,335.8 670.7,337.2 634.5,339.9 619.0,341.8 603.4,344.7 593.1,347.2 582.8,350.6 567.2,357.8 560.3,362.5 551.7,370.1 546.6,376.2 541.4,384.0 536.6,393.4 532.8,403.7 527.6,424.3 523.8,450.1 521.1,486.1 519.7,527.3 518.9,589.1 518.7,687.0 361.9,687.0 362.3,542.8 363.2,455.2 365.1,388.2 367.9,347.0 370.7,320.9 375.1,295.5 380.4,274.9 384.0,264.6 390.9,249.2 397.2,238.9 405.3,228.6 416.3,218.3 427.6,210.5 442.6,202.8 456.5,197.7 474.2,192.9 494.8,188.9 510.4,186.7 536.2,184.2 563.3,182.2Z" fill="#00efff"/><path d="M587.9,182.2 686.2,180.3 872.4,179.6 872.4,331.5 768.9,331.7 706.9,332.5 660.3,334.2 629.3,336.7 613.8,338.7 598.3,341.7 587.9,344.3 577.6,347.8 567.9,352.2 562.1,355.5 552.6,362.5 547.4,367.6 541.4,375.2 536.5,383.1 529.9,398.5 524.5,419.1 521.9,434.6 520.1,450.1 517.9,480.9 516.3,527.3 515.6,589.1 515.4,687.0 362.9,687.0 363.4,522.1 364.7,429.4 365.7,398.5 367.4,367.6 369.5,341.9 371.9,321.3 375.9,297.8 380.3,280.1 386.2,262.7 391.4,251.5 399.1,238.9 406.9,229.2 417.3,219.5 426.2,213.1 435.1,208.0 448.3,202.1 461.1,197.7 481.6,192.5 500.0,189.4 520.7,186.7 551.7,184.1 586.6,182.2Z" fill="#00dfff"/><path d="M624.1,182.2 717.2,181.1 872.4,180.6 872.4,328.2 768.9,328.4 706.9,329.1 660.3,330.7 629.3,333.0 613.8,334.9 598.3,337.5 587.9,340.0 577.6,343.2 567.2,347.4 558.5,352.2 551.7,357.0 545.6,362.5 541.0,367.6 536.2,374.4 531.4,383.1 527.1,393.4 523.9,403.7 521.5,414.0 518.8,429.5 516.9,444.9 514.6,475.8 513.0,522.1 512.3,584.0 512.1,687.0 363.9,687.0 364.5,511.8 366.1,419.1 367.9,377.9 370.2,347.0 373.2,321.3 376.7,300.7 381.1,282.3 386.2,266.8 391.4,254.9 397.6,244.0 405.2,233.8 415.2,223.4 427.6,214.2 438.5,208.0 450.4,202.8 466.1,197.7 488.3,192.5 505.2,189.9 525.0,187.4 551.7,185.3 582.8,183.6 621.9,182.2Z" fill="#00cfff"/><path d="M696.5,182.2 872.4,181.7 872.4,324.9 706.9,325.7 660.3,327.2 629.3,329.3 613.8,331.0 598.3,333.5 577.6,338.6 567.2,342.4 557.9,347.1 550.0,352.2 543.9,357.3 536.2,366.0 531.6,372.8 524.4,388.2 521.0,398.5 518.5,408.8 515.7,424.3 513.7,439.8 511.4,470.6 509.7,517.0 509.0,578.8 508.8,687.0 365.0,687.0 365.7,496.4 366.8,434.6 368.5,388.2 370.9,352.2 375.3,316.1 380.4,290.4 386.2,271.1 391.4,258.6 399.6,244.1 407.4,233.8 417.3,223.9 427.6,216.2 442.2,208.0 454.8,202.8 469.0,198.4 484.5,194.8 500.0,191.9 525.9,188.6 546.6,186.8 608.6,183.8 694.4,182.2Z" fill="#00bfff"/><path d="M556.9,187.2 603.4,185.1 665.5,183.8 872.4,182.8 872.4,321.6 763.8,321.8 701.7,322.5 655.2,323.9 624.1,326.1 608.6,327.9 593.1,330.4 572.4,335.8 556.9,342.3 549.0,347.0 541.4,353.0 536.2,358.3 529.2,367.6 525.9,373.5 521.6,383.1 518.1,393.4 515.4,403.7 512.6,419.1 510.5,434.6 507.8,470.6 506.3,517.0 505.7,578.8 505.5,687.0 366.1,687.0 366.5,542.8 367.5,455.2 369.7,388.2 372.7,347.0 375.8,321.3 378.5,305.9 381.1,293.7 386.5,274.9 392.9,259.5 401.6,244.0 409.8,233.8 417.3,226.3 427.5,218.3 438.0,212.0 453.5,205.1 469.0,200.0 484.5,196.2 504.4,192.5 525.9,189.9 554.2,187.4Z" fill="#00afff"/><path d="M577.6,187.3 624.1,185.7 681.0,184.8 872.4,184.0 872.4,318.3 701.7,319.1 655.2,320.4 619.0,322.9 603.4,324.8 587.9,327.4 577.6,329.8 567.2,332.9 557.7,336.8 551.7,339.8 541.4,346.6 536.2,351.2 530.6,357.3 525.9,364.0 521.1,372.8 516.9,383.1 513.7,393.4 511.3,403.7 508.7,419.1 506.8,434.6 504.3,470.6 503.0,517.0 502.2,687.0 367.3,687.0 367.8,527.3 369.2,434.6 371.5,377.9 374.0,347.0 376.5,326.5 381.0,300.7 385.0,285.2 390.3,269.8 394.8,259.5 401.8,247.2 407.8,238.9 417.3,228.7 427.6,220.5 439.6,213.1 450.5,208.0 464.6,202.8 484.1,197.7 505.2,193.9 520.7,191.8 546.6,189.3 575.4,187.4Z" fill="#009fff"/><path d="M608.6,187.3 706.9,185.7 872.4,185.2 872.4,315.1 696.5,315.8 650.0,317.2 613.8,319.7 598.3,321.6 582.8,324.3 572.4,326.8 562.1,330.1 546.6,337.2 539.5,341.9 531.0,349.4 525.9,355.5 520.7,363.3 516.0,372.8 512.2,383.1 507.2,403.7 504.8,419.1 503.1,434.6 500.8,470.6 499.6,517.0 498.9,687.0 368.5,687.0 369.1,517.0 370.7,421.7 372.6,383.1 374.9,352.2 377.2,331.6 381.5,305.9 386.2,286.6 391.4,271.5 396.6,259.9 402.7,249.2 410.4,238.9 420.4,228.6 432.8,219.3 443.1,213.3 455.1,208.0 470.3,202.8 489.7,198.1 505.2,195.4 525.8,192.5 546.6,190.7 606.0,187.4Z" fill="#008fff"/><path d="M665.5,187.3 872.4,186.4 872.4,311.8 696.5,312.4 650.0,313.6 613.8,316.0 598.3,317.7 582.8,320.2 562.1,325.4 546.6,331.8 538.3,336.8 531.0,342.4 525.9,347.6 518.7,357.3 515.5,362.8 511.1,372.8 507.7,383.1 505.1,393.4 502.3,408.8 500.3,424.3 497.7,460.4 496.3,506.7 495.6,687.0 369.7,687.0 370.5,491.2 371.5,439.8 373.1,398.5 375.9,355.8 379.5,326.5 384.4,300.7 390.2,280.1 396.4,264.6 401.8,254.5 408.8,244.1 417.3,234.3 427.6,225.4 438.0,218.4 447.9,213.1 460.2,208.0 476.6,202.8 494.8,198.7 510.4,196.1 536.2,192.9 587.9,189.5 661.2,187.4Z" fill="#0080ff"/><path d="M562.1,192.3 608.6,190.1 670.7,188.7 872.4,187.6 872.4,308.4 691.4,309.0 644.8,310.3 608.6,312.7 593.1,314.4 577.6,317.0 567.2,319.3 556.9,322.4 541.4,329.1 531.0,335.8 525.9,340.3 520.7,345.9 515.5,353.1 510.4,362.5 506.3,372.8 503.2,383.1 500.9,393.4 498.3,408.9 496.5,424.3 494.2,460.4 492.9,506.7 492.3,687.0 370.9,686.9 371.4,537.6 372.8,444.9 374.0,408.8 375.9,373.5 380.3,331.6 386.2,299.8 391.4,282.1 396.6,268.9 401.8,258.6 406.9,250.3 411.5,244.0 417.3,237.5 427.6,228.0 442.2,218.3 452.6,213.1 465.8,208.0 479.3,204.0 510.4,197.6 531.0,195.0 557.6,192.5Z" fill="#0070ff"/><path d="M582.8,192.5 629.3,190.9 686.2,189.9 872.4,189.0 872.4,305.1 691.4,305.6 644.8,306.7 608.6,308.9 577.6,312.8 556.9,317.6 546.6,321.3 536.2,326.3 528.2,331.6 522.2,336.8 515.5,344.2 510.4,352.0 507.5,357.3 503.2,367.6 500.0,377.9 497.6,388.2 495.0,403.7 493.2,419.1 490.8,455.2 489.5,501.5 488.9,687.0 372.3,687.0 373.0,522.1 374.8,424.3 376.1,393.4 378.4,362.5 381.1,337.5 384.6,316.1 386.7,305.9 391.4,288.3 396.6,274.1 403.8,259.5 412.1,247.0 419.1,238.9 427.6,231.0 438.0,223.4 446.8,218.3 458.6,212.8 472.0,208.0 491.6,202.8 525.9,197.2 551.7,194.6 581.7,192.5Z" fill="#0060ff"/><path d="M619.0,192.5 712.0,191.0 872.4,190.4 872.4,301.7 686.2,302.2 639.6,303.3 603.4,305.5 587.9,307.1 572.4,309.5 551.7,314.5 541.4,318.3 535.0,321.3 526.5,326.5 520.0,331.6 514.9,336.8 507.4,347.0 504.5,352.2 500.1,362.5 496.8,372.8 494.3,383.1 491.6,398.5 489.8,414.0 487.3,450.1 486.1,496.4 485.5,687.0 373.8,687.0 374.6,506.7 375.5,450.1 376.7,414.0 378.4,383.1 381.1,351.5 386.2,316.8 391.3,295.5 396.6,279.8 401.8,268.1 406.9,258.7 413.5,249.2 422.4,238.9 432.8,229.9 442.3,223.4 453.5,217.5 463.5,213.1 479.0,208.0 500.0,203.0 515.5,200.4 535.5,197.7 556.9,195.8 618.6,192.5Z" fill="#0050ff"/><path d="M701.7,192.5 872.4,191.8 872.4,298.3 681.0,298.7 634.5,299.8 598.3,302.0 568.5,305.9 556.9,308.3 546.6,311.2 536.2,315.1 525.9,320.6 517.8,326.5 512.4,331.6 505.2,340.8 501.5,347.0 495.0,362.5 492.1,372.8 489.7,384.3 485.8,414.0 483.6,450.1 482.5,496.4 482.1,687.0 375.2,687.0 376.1,496.4 377.6,434.6 379.7,388.2 382.3,357.3 386.4,326.5 392.1,300.7 396.6,286.3 401.2,274.9 406.9,263.6 416.7,249.2 426.2,238.9 432.8,233.2 447.2,223.4 457.3,218.3 470.0,213.1 486.9,208.0 515.5,202.2 556.9,197.4 619.0,194.2 698.0,192.5Z" fill="#0040ff"/><path d="M577.6,197.7 624.1,195.7 681.0,194.5 872.4,193.4 872.4,294.8 675.8,295.2 629.3,296.3 593.1,298.5 577.6,300.1 562.1,302.6 551.7,304.8 541.4,307.8 531.0,311.8 522.9,316.1 515.5,321.2 509.7,326.5 505.1,331.6 500.0,338.9 495.7,347.0 491.6,357.3 488.6,367.6 486.4,377.9 483.9,393.4 482.3,408.8 480.1,444.9 479.0,491.2 478.6,687.0 376.8,687.0 377.5,522.1 379.6,424.3 381.1,393.0 383.6,362.5 386.2,340.1 390.6,316.1 396.6,293.5 401.6,280.1 406.9,269.0 412.1,260.2 420.3,249.2 427.6,241.4 436.6,233.8 443.8,228.6 452.6,223.5 463.8,218.1 477.3,213.1 496.0,208.0 525.9,202.6 551.7,199.8 577.2,197.7Z" fill="#0030ff"/><path d="M619.0,197.5 712.0,195.8 872.4,195.1 872.4,291.3 675.8,291.5 629.3,292.5 593.1,294.4 562.1,298.0 541.4,302.6 531.0,306.1 520.7,311.0 512.8,316.1 506.7,321.3 500.0,328.9 494.9,336.8 492.2,341.9 488.0,352.2 485.0,362.5 482.7,372.8 480.2,388.2 478.6,403.7 476.4,439.8 475.4,486.1 475.0,687.0 378.5,687.0 379.3,517.0 380.2,460.4 381.5,419.1 383.8,383.1 386.2,355.9 391.4,322.8 396.6,301.8 401.8,286.7 406.9,275.0 412.1,265.7 420.0,254.3 429.3,244.0 438.0,236.5 449.4,228.6 458.7,223.4 470.5,218.3 485.6,213.1 505.2,208.3 515.5,206.4 539.9,202.8 556.9,201.2 614.0,197.7Z" fill="#0020ff"/><path d="M696.5,197.6 872.4,196.8 872.4,287.7 670.7,287.8 624.1,288.7 587.9,290.6 556.9,294.1 536.2,298.8 525.9,302.4 518.3,305.9 510.4,310.6 503.4,316.1 498.5,321.3 491.2,331.6 488.5,336.8 484.2,347.0 481.2,357.3 478.9,367.6 476.4,383.1 474.8,398.5 472.6,434.6 471.6,480.9 471.4,687.0 380.2,687.0 381.2,501.5 382.7,439.8 385.0,393.4 387.7,362.5 392.2,331.6 396.7,311.0 401.8,294.7 406.9,282.0 413.4,269.8 422.4,256.6 428.9,249.2 440.2,238.9 453.5,229.9 465.8,223.4 478.5,218.3 494.8,213.3 520.7,207.8 562.1,202.7 619.0,199.5 692.3,197.7Z" fill="#0010ff"/><path d="M593.1,202.7 639.6,200.9 696.5,199.7 872.4,198.7 872.4,283.9 660.3,284.0 613.8,285.0 577.6,287.0 562.1,288.6 546.6,291.0 536.2,293.3 525.9,296.3 515.5,300.6 510.4,303.3 500.0,310.7 494.8,315.8 489.7,322.4 484.5,331.3 478.5,347.0 473.8,367.6 471.7,383.1 470.3,398.5 468.5,434.6 467.7,480.9 467.7,687.0 382.1,687.0 382.9,527.3 385.1,429.4 386.8,398.5 390.1,362.5 392.1,347.0 397.0,321.3 401.8,304.1 406.8,290.4 412.1,279.1 417.3,270.1 424.9,259.5 434.2,249.2 443.1,241.4 453.8,233.8 462.8,228.6 474.2,223.3 487.9,218.3 506.9,213.1 536.2,207.9 562.1,205.1 590.2,202.8Z" fill="#0000ff"/><path d="M644.8,202.8 732.7,201.4 872.4,200.8 872.4,280.1 660.3,280.0 613.8,280.7 577.6,282.3 546.6,285.7 525.9,290.2 510.4,296.0 501.9,300.7 494.8,306.1 489.7,311.3 484.5,318.1 479.7,326.5 475.5,336.8 472.5,347.0 470.3,357.3 468.0,372.8 466.5,388.2 464.6,424.3 463.8,470.6 463.8,687.0 384.2,687.0 385.2,506.7 386.2,457.3 388.2,414.0 391.4,372.3 395.8,341.9 401.8,315.2 406.9,299.6 412.1,287.6 417.3,277.9 422.4,269.8 430.5,259.5 438.0,251.6 448.3,242.7 461.6,233.8 471.3,228.6 483.4,223.4 499.1,218.3 520.7,213.2 551.7,208.6 593.1,205.1 641.8,202.8Z" fill="#0000ef"/><path d="M587.9,207.9 634.5,205.6 691.4,204.2 872.4,202.9 872.4,276.1 650.0,275.8 603.4,276.5 572.4,277.8 541.4,280.9 520.7,285.1 505.2,290.6 496.2,295.5 489.4,300.7 484.3,305.9 479.3,312.3 474.4,321.3 470.3,331.6 467.5,341.9 465.4,352.2 463.3,367.6 461.8,383.1 460.3,414.0 459.5,460.4 459.8,687.0 386.3,687.0 387.3,527.3 389.7,434.6 391.4,402.4 394.3,372.8 396.6,355.1 401.8,328.9 406.9,311.0 412.1,297.8 417.3,287.2 422.4,278.5 428.6,269.8 438.0,258.8 448.3,249.1 462.2,238.9 470.9,233.8 481.5,228.6 494.9,223.4 512.8,218.3 539.1,213.1 586.6,208.0Z" fill="#0000df"/><path d="M639.6,208.0 727.6,206.3 872.4,205.5 872.4,271.8 634.5,271.3 593.1,271.8 562.1,273.0 531.0,276.1 520.7,277.9 510.4,280.4 500.0,284.0 494.8,286.4 488.0,290.4 481.6,295.5 476.8,300.7 473.0,305.9 469.0,313.3 465.7,321.3 462.7,331.6 460.6,341.9 458.5,357.3 457.1,372.8 455.6,403.7 455.0,450.1 455.5,687.0 388.9,687.0 390.0,517.0 391.4,455.2 393.0,424.3 396.6,379.6 400.7,352.2 406.9,325.3 412.1,310.3 417.3,298.8 422.4,289.4 427.6,281.5 438.0,268.5 446.6,259.5 458.3,249.2 473.1,238.9 482.6,233.8 494.2,228.6 509.2,223.4 530.2,218.3 541.4,216.4 563.8,213.1 577.6,211.8 639.6,208.0Z" fill="#0000cf"/><path d="M603.4,213.1 650.0,210.9 701.7,209.5 872.4,208.1 872.4,267.3 619.0,266.3 577.6,266.6 551.7,267.4 525.9,269.2 510.4,271.3 500.0,273.4 489.7,276.5 484.5,278.6 479.3,281.4 474.0,285.2 469.0,290.3 465.1,295.5 462.3,300.7 458.5,311.0 455.9,321.3 454.2,331.6 451.3,362.5 450.4,388.2 450.0,429.4 451.0,687.0 391.5,687.0 392.8,522.1 394.1,470.6 396.2,424.3 398.4,398.5 401.8,369.9 406.9,343.9 412.1,326.5 417.3,313.8 422.4,303.9 427.6,295.8 432.8,289.0 443.1,277.6 466.8,254.3 479.6,244.0 487.7,238.9 497.7,233.8 510.4,228.6 527.9,223.4 554.0,218.3 602.1,213.1Z" fill="#0000bf"/><path d="M686.2,213.1 763.8,212.0 872.4,211.5 872.4,262.4 717.2,261.6 536.2,259.7 515.5,259.1 505.2,257.7 500.0,256.0 497.4,254.3 497.6,249.2 501.6,244.0 508.5,238.9 518.5,233.8 536.2,227.7 554.0,223.4 590.2,218.3 634.5,215.2 685.8,213.1ZM432.8,313.7 438.0,313.6 439.6,316.1 441.4,321.3 442.2,326.5 443.1,340.3 445.2,527.3 446.0,687.0 394.9,687.0 395.5,578.8 396.6,501.1 398.7,450.0 401.8,406.0 406.9,369.9 412.1,348.7 417.3,334.6 422.4,324.6 427.6,317.8 429.9,316.1Z" fill="#0000af"/><path d="M665.5,218.2 748.2,216.4 872.4,215.5 872.4,256.7 737.9,255.9 639.6,254.4 587.9,252.2 555.1,249.2 546.6,246.7 540.7,244.0 541.3,238.9 549.8,233.8 566.1,228.6 595.6,223.4 629.3,220.5 663.8,218.3ZM422.4,357.3 427.6,356.7 430.3,362.5 432.0,367.6 432.8,371.0 434.2,383.1 436.1,408.8 438.0,455.0 439.0,506.7 440.3,687.0 398.9,687.0 400.3,532.5 401.8,479.3 403.5,450.1 406.9,411.3 412.1,381.9 417.3,365.7 422.4,357.3Z" fill="#00009f"/><path d="M696.5,223.4 768.9,221.8 872.4,220.9 872.4,249.8 783.5,249.2 722.4,248.1 670.7,246.5 629.3,244.0 613.8,241.3 603.8,238.9 605.9,233.8 628.4,228.6 660.3,225.7 694.4,223.4ZM417.3,421.6 422.4,419.5 424.9,429.4 427.6,444.9 428.7,460.4 430.6,501.5 432.0,553.0 433.4,687.0 404.3,687.0 405.2,584.0 406.9,509.8 409.2,475.8 412.1,444.0 416.6,424.3Z" fill="#00008f"/></g>
<path d="M872.4,211.4 758.6,212.0 681.3,213.1 629.3,215.4 588.8,218.3 553.0,223.4 531.9,228.6 517.8,233.8 507.8,238.9 500.8,244.1 496.5,249.2 495.9,254.3 500.0,257.0 505.2,258.5 510.4,259.2 520.7,259.8 717.2,261.8 872.4,262.5M446.2,687.0 445.4,532.5 443.4,336.8 442.9,326.5 442.1,321.3 440.7,316.1 438.0,312.0 432.8,312.7 427.6,316.9 422.4,323.9 417.3,333.8 412.1,347.9 406.9,368.9 401.8,404.6 398.8,444.9 396.6,496.7 395.4,573.7 394.8,687.0" fill="none" stroke="#0000b0" stroke-width="1" shape-rendering="crispEdges"/><path d="M872.4,194.0 732.7,194.5 644.8,195.7 587.9,197.7 562.1,199.5 536.2,202.0 520.7,204.2 499.5,208.0 480.0,213.1 469.0,217.1 454.7,223.4 445.7,228.6 438.0,233.9 427.6,242.9 417.4,254.3 412.1,262.1 406.9,271.0 401.8,282.1 396.6,296.3 391.4,315.6 387.6,336.8 385.4,352.2 382.9,377.9 381.1,403.7 379.1,460.4 377.9,547.9 377.4,687.0M477.4,687.0 477.7,491.2 478.8,444.9 480.8,408.8 482.4,393.4 484.8,378.0 486.9,367.6 489.8,357.3 493.7,347.0 496.2,341.9 500.0,335.3 506.9,326.5 512.3,321.3 520.7,315.2 531.0,309.9 541.4,306.0 551.7,303.1 562.1,301.0 577.6,298.6 593.1,297.0 629.3,295.0 675.8,293.9 872.4,293.6" fill="none" stroke="#002aff" stroke-width="1" shape-rendering="crispEdges"/><path d="M872.4,183.6 722.4,184.1 634.5,185.2 568.9,187.4 525.9,190.9 505.2,193.5 482.3,197.7 463.8,202.7 453.5,206.4 438.5,213.1 429.9,218.3 422.4,223.6 412.1,233.2 403.3,244.0 396.9,254.3 391.4,265.6 386.2,279.5 381.1,298.5 378.6,311.0 375.9,327.5 373.7,347.0 370.6,388.2 368.4,455.2 367.4,542.8 366.9,687.0M503.1,687.0 503.3,578.8 503.9,517.0 505.3,470.6 507.8,434.6 509.7,419.1 512.4,403.7 514.9,393.4 518.1,383.1 522.5,372.8 525.9,366.5 531.0,359.0 536.2,353.1 543.0,347.0 550.6,341.9 556.9,338.5 567.2,334.2 577.6,331.0 587.9,328.5 603.4,325.8 619.0,323.9 655.2,321.4 701.7,320.0 763.8,319.4 872.4,319.2" fill="none" stroke="#00a4ff" stroke-width="1" shape-rendering="crispEdges"/><path d="M872.4,175.9 722.4,176.2 632.3,177.1 572.4,179.0 521.9,182.2 500.0,184.9 483.6,187.4 460.9,192.6 448.3,196.5 433.0,202.8 423.6,208.0 416.0,213.1 406.9,220.8 399.6,228.6 391.4,240.0 386.2,249.4 379.9,264.6 375.9,277.2 370.7,299.8 368.2,316.1 365.6,337.9 362.2,388.2 360.4,447.9 359.5,537.6 359.1,687.0M528.3,687.0 528.6,594.2 529.4,537.6 531.0,492.3 533.6,460.4 535.6,444.9 538.4,429.4 541.0,419.1 544.3,408.8 546.6,403.3 551.7,393.2 556.9,385.6 563.7,377.9 569.7,372.8 577.4,367.6 587.5,362.5 593.1,360.3 603.4,356.9 613.8,354.4 629.3,351.6 644.8,349.6 676.9,347.0 722.4,345.4 779.3,344.6 872.4,344.4" fill="none" stroke="#1effe1" stroke-width="1" shape-rendering="crispEdges"/><path d="M872.4,169.5 717.2,169.9 624.1,170.8 567.2,172.4 515.5,175.8 494.8,178.1 474.2,181.3 463.8,183.5 448.3,187.5 433.9,192.5 422.4,197.9 412.1,204.1 406.7,208.0 400.7,213.1 391.4,223.2 386.2,230.4 381.1,239.2 374.4,254.3 370.7,264.9 365.6,285.4 362.1,305.9 359.5,326.5 357.4,352.2 355.9,377.9 354.2,434.6 353.2,527.3 352.8,687.0M554.8,687.0 555.2,609.7 556.1,558.2 557.8,517.0 560.5,486.1 564.4,460.4 566.8,450.1 569.9,439.8 573.9,429.4 577.6,422.2 582.8,414.1 587.9,407.8 593.1,402.8 603.4,395.2 608.6,392.2 619.0,387.6 629.3,384.1 639.6,381.4 650.0,379.3 665.5,377.0 696.5,374.1 737.9,372.2 789.6,371.2 872.4,370.7" fill="none" stroke="#98ff67" stroke-width="1" shape-rendering="crispEdges"/><path d="M872.4,164.1 712.0,164.5 619.0,165.4 556.9,167.1 531.0,168.6 505.2,170.7 484.5,173.1 461.3,177.1 443.1,181.7 432.8,185.1 417.3,191.8 407.2,197.7 400.2,202.8 391.4,210.9 386.2,216.7 381.2,223.4 375.9,232.4 370.7,243.2 365.6,257.6 361.0,274.9 358.9,285.2 355.7,305.9 353.5,326.5 350.1,377.9 348.6,434.6 347.7,527.3 347.4,687.0M584.1,687.0 584.7,620.0 585.8,573.7 587.7,537.6 591.0,506.7 594.7,486.1 597.3,475.8 600.7,465.5 603.4,458.9 608.6,449.1 613.8,441.7 619.0,435.8 624.1,431.0 629.3,427.1 634.5,423.7 644.8,418.5 655.2,414.6 665.5,411.6 678.2,408.8 691.4,406.7 722.4,403.5 758.6,401.6 805.1,400.5 872.4,399.9" fill="none" stroke="#ffed00" stroke-width="1" shape-rendering="crispEdges"/><path d="M872.4,159.4 706.9,159.7 613.8,160.6 556.9,162.2 505.2,165.4 484.5,167.6 463.8,170.8 453.5,172.9 437.0,177.1 422.4,182.2 411.2,187.4 401.8,193.0 395.3,197.7 389.4,202.8 381.1,211.9 375.9,219.0 370.3,228.6 363.6,244.0 360.1,254.3 355.2,274.0 351.6,295.5 349.1,316.1 347.1,341.9 345.6,367.7 343.8,429.4 342.9,522.1 342.6,687.0M618.1,687.0 619.0,630.3 620.5,589.1 622.8,558.2 626.2,532.5 630.7,511.9 634.0,501.5 638.3,491.2 644.8,479.9 650.0,473.1 655.2,467.7 665.5,459.6 673.1,455.2 681.0,451.6 691.4,447.9 701.7,445.0 722.4,441.0 748.2,438.0 779.3,435.9 820.6,434.5 872.4,433.8" fill="none" stroke="#ff7300" stroke-width="1" shape-rendering="crispEdges"/><path d="M872.4,155.2 701.7,155.4 619.0,156.1 551.7,158.0 500.0,161.1 479.3,163.5 458.6,166.6 438.0,171.2 422.4,176.2 408.3,182.2 399.2,187.4 391.4,192.9 381.1,202.4 372.5,213.1 366.3,223.4 360.4,236.3 356.0,249.2 349.8,274.9 346.7,295.5 344.3,316.1 341.2,367.6 339.3,434.6 338.6,517.0 338.4,687.0M660.4,687.0 661.6,645.8 663.3,614.9 665.8,589.1 669.1,568.5 671.4,558.2 674.3,547.9 680.5,532.5 686.4,522.1 694.7,511.9 700.2,506.7 706.9,501.7 717.2,495.9 732.7,489.7 743.1,486.8 753.4,484.6 774.1,481.3 800.0,478.8 831.0,477.1 872.4,475.9" fill="none" stroke="#f90000" stroke-width="1" shape-rendering="crispEdges"/><path d="M872.4,146.2 794.8,146.3 789.7,151.3 505.2,151.4 500.0,156.5 463.8,156.5 458.6,161.6 438.0,161.7 432.8,166.8 422.4,166.8 417.3,171.9 406.9,172.0 396.6,182.2 391.4,182.3 381.1,192.6 365.6,208.0 365.6,213.2 355.2,223.4 355.2,233.8 350.0,238.9 350.0,249.2 344.9,254.3 344.9,275.0 339.7,280.1 339.7,316.2 334.6,321.3 334.5,604.6 329.4,609.7 329.4,687.0M722.4,687.0 722.4,650.9 727.5,645.8 727.6,620.0 732.7,614.9 732.7,604.5 737.9,599.4 737.9,589.1 748.1,578.8 748.2,573.6 758.6,563.4 763.8,563.2 774.1,553.0 784.4,553.0 789.6,547.9 800.0,547.9 805.1,542.8 831.0,542.7 836.1,537.6 872.4,537.6" fill="none" stroke="#800000" stroke-width="1" shape-rendering="crispEdges"/>
</g>
<svg x="330" y="146" width="542" height="541" viewBox="330 146 542 541"><polyline points="417.3,557.7 417.3,556.9 417.3,556.1 417.3,555.3 417.3,554.4 417.3,553.6 417.4,552.8 417.4,552.0 417.4,551.2 417.4,550.4 417.4,549.5 417.4,548.7 417.4,547.9 417.4,547.1 417.5,546.3 417.5,545.4 417.5,544.6 417.5,543.8 417.5,543.0 417.5,542.2 417.5,541.4 417.5,540.5 417.5,539.7 417.5,538.9 417.5,538.1 417.5,537.3 417.6,536.4 417.6,535.6 417.6,534.8 417.6,534.0 417.6,533.2 417.6,532.4 417.6,531.5 417.6,530.7 417.6,529.9 417.6,529.1 417.6,528.3 417.6,527.5 417.6,526.6 417.6,525.8 417.6,525.0 417.6,524.2 417.6,523.4 417.6,522.5 417.6,521.7 417.6,520.9 417.6,520.1 417.6,519.3 417.6,518.5 417.6,517.6 417.6,516.8 417.6,516.0 417.6,515.2 417.6,514.4 417.6,513.6 417.6,512.7 417.6,511.9 417.6,511.1 417.6,510.3 417.6,509.5 417.6,508.6 417.6,507.8 417.6,507.0 417.6,506.2 417.6,505.4 417.6,504.6 417.6,503.7 417.6,502.9 417.6,502.1 417.6,501.3 417.6,500.5 417.6,499.7 417.6,498.8 417.6,498.0 417.6,497.2 417.6,496.4 417.6,495.6 417.6,494.7 417.6,493.9 417.5,493.1 417.5,492.3 417.5,491.5 417.5,490.7 417.5,489.8 417.5,489.0 417.5,488.2 417.5,487.4 417.5,486.6 417.5,485.8 417.5,484.9 417.5,484.1 417.5,483.3 417.5,482.5 417.5,481.7 417.5,480.8 417.5,480.0 417.5,479.2 417.5,478.4 417.5,477.6 417.5,476.8 417.5,475.9 417.5,475.1 417.5,474.3 417.5,473.5 417.5,472.7 417.5,471.9 417.5,471.0 417.5,470.2 417.5,469.4 417.5,468.6 417.5,467.8 417.5,467.0 417.5,466.1 417.5,465.3 417.5,464.5 417.5,463.7 417.5,462.9 417.5,462.1 417.5,461.2 417.5,460.4 417.5,459.6 417.5,458.8 417.5,458.0 417.5,457.1 417.5,456.3 417.5,455.5 417.5,454.7 417.5,453.9 417.5,453.1 417.6,452.2 417.6,451.4 417.6,450.6 417.6,449.8 417.6,449.0 417.6,448.2 417.6,447.3 417.6,446.5 417.6,445.7 417.6,444.9 417.6,444.1 417.6,443.3 417.7,442.4 417.7,441.6 417.7,440.8 417.7,440.0 417.7,439.2 417.7,438.4 417.7,437.5 417.7,436.7 417.8,435.9 417.8,435.1 417.8,434.3 417.8,433.5 417.8,432.6 417.8,431.8 417.8,431.0 417.9,430.2 417.9,429.4 417.9,428.6 417.9,427.7 417.9,426.9 418.0,426.1 418.0,425.3 418.0,424.5 418.0,423.7 418.0,422.9 418.1,422.0 418.1,421.2 418.1,420.4 418.1,419.6 418.2,418.8 418.2,418.0 418.2,417.1 418.3,416.3 418.3,415.5 418.3,414.7 418.3,413.9 418.4,413.1 418.4,412.2 418.4,411.4 418.5,410.6 418.5,409.8 418.5,409.0 418.6,408.2 418.6,407.4 418.6,406.5 418.7,405.7 418.7,404.9 418.7,404.1 418.8,403.3 418.8,402.5 418.9,401.6 418.9,400.8 418.9,400.0 419.0,399.2 419.0,398.4 419.1,397.6 419.1,396.8 419.2,395.9 419.2,395.1 419.3,394.3 419.3,393.5 419.4,392.7 419.4,391.9 419.5,391.0 419.5,390.2 419.6,389.4 419.6,388.6 419.7,387.8 419.7,387.0 419.8,386.2 419.8,385.3 419.9,384.5 419.9,383.7 420.0,382.9 420.1,382.1 420.1,381.3 420.2,380.5 420.3,379.6 420.3,378.8 420.4,378.0 420.4,377.2 420.5,376.4 420.6,375.6 420.7,374.8 420.7,373.9 420.8,373.1 420.9,372.3 420.9,371.5 421.0,370.7 421.1,369.9 421.2,369.1 421.2,368.2 421.3,367.4 421.4,366.6 421.5,365.8 421.6,365.0 421.6,364.2 421.7,363.4 421.8,362.5 421.9,361.7 422.0,360.9 422.1,360.1 422.2,359.3 422.2,358.5 422.3,357.7 422.4,356.9 422.5,356.0 422.6,355.2 422.7,354.4 422.8,353.6 422.9,352.8 423.0,352.0 423.1,351.2 423.2,350.3 423.3,349.5 423.4,348.7 423.5,347.9 423.6,347.1 423.7,346.3 423.8,345.5 424.0,344.7 424.1,343.9 424.2,343.0 424.3,342.2 424.4,341.4 424.6,340.6 424.7,339.8 424.8,339.0 424.9,338.2 425.1,337.4 425.2,336.6 425.3,335.8 425.5,335.0 425.6,334.2 425.8,333.3 425.9,332.5 426.1,331.7 426.2,330.9 426.4,330.1 426.5,329.3 426.7,328.5 426.9,327.7 427.0,326.9 427.2,326.1 427.4,325.3 427.6,324.5 427.8,323.7 428.0,323.0 428.2,322.2 428.4,321.4 428.6,320.6 428.8,319.8 429.0,319.0 429.2,318.2 429.4,317.4 429.6,316.6 429.9,315.9 430.1,315.1 430.3,314.3 430.6,313.5 430.8,312.7 431.1,312.0 431.3,311.2 431.6,310.4 431.8,309.6 432.1,308.9 432.4,308.1 432.7,307.3 433.0,306.6 433.2,305.8 433.5,305.0 433.8,304.3 434.2,303.5 434.5,302.7 434.8,302.0 435.1,301.2 435.5,300.5 435.8,299.7 436.1,299.0 436.5,298.3 436.9,297.5 437.2,296.8 437.6,296.1 438.0,295.4 438.4,294.7 438.8,294.0 439.2,293.3 439.6,292.6 440.1,291.9 440.5,291.2 440.9,290.5 441.4,289.9 441.9,289.2 442.3,288.6 442.8,287.9 443.3,287.3 443.8,286.7 444.4,286.1 444.9,285.5 445.4,284.9 446.0,284.3 446.5,283.8 447.1,283.2 447.7,282.7 448.3,282.1 448.9,281.6 449.5,281.1 450.2,280.6 450.8,280.1 451.4,279.6 452.1,279.1 452.8,278.7 453.4,278.2 454.1,277.8 454.8,277.3 455.5,276.9 456.2,276.4 456.9,276.0 457.6,275.6 458.3,275.2 459.0,274.7 459.7,274.3 460.5,273.9 461.2,273.5 461.9,273.1 462.6,272.7 463.4,272.3 464.1,271.9 464.8,271.5 465.6,271.1 466.3,270.7 467.0,270.3 467.8,269.9 468.5,269.5 469.2,269.1 469.9,268.7 470.7,268.3 471.4,267.9 472.1,267.5 472.8,267.1 473.5,266.7 474.2,266.2 474.9,265.8 475.6,265.4 476.3,264.9 476.9,264.5 477.6,264.1 478.3,263.6 478.9,263.2 479.6,262.7 480.3,262.2 480.9,261.8 481.6,261.3 482.2,260.8 482.8,260.3 483.5,259.9 484.1,259.4 484.7,258.9 485.4,258.4 486.0,257.9 486.6,257.4 487.3,256.9 487.9,256.4 488.5,255.9 489.1,255.4 489.8,254.9 490.4,254.4 491.0,253.9 491.6,253.4 492.3,252.8 492.9,252.3 493.5,251.8 494.1,251.3 494.8,250.8 495.4,250.3 496.1,249.7 496.7,249.2 497.3,248.7 498.0,248.2 498.6,247.6 499.3,247.1 499.9,246.6 500.6,246.1 501.3,245.6 501.9,245.0 502.6,244.5 503.3,244.0 504.0,243.5 504.6,243.0 505.3,242.5 506.0,242.0 506.7,241.5 507.4,241.0 508.1,240.5 508.8,240.1 509.5,239.6 510.2,239.1 511.0,238.7 511.7,238.3 512.4,237.8 513.1,237.4 513.8,237.0 514.6,236.6 515.3,236.2 516.0,235.8 516.8,235.5 517.5,235.1 518.3,234.8 519.0,234.5 519.8,234.1 520.5,233.9 521.3,233.6 522.0,233.3 522.8,233.1 523.5,232.8 524.3,232.6 525.1,232.4 525.8,232.3 526.6,232.1 527.4,232.0 528.1,231.8 528.9,231.7 529.7,231.6 530.5,231.6 531.2,231.5 532.0,231.5 532.8,231.5 533.6,231.5 534.4,231.5 535.2,231.5 536.0,231.5 536.7,231.6 537.5,231.6 538.3,231.7 539.1,231.8 539.9,231.9 540.7,232.0 541.5,232.2 542.3,232.3 543.1,232.5 543.9,232.6 544.7,232.8 545.4,233.0 546.2,233.2 547.0,233.4 547.8,233.6 548.6,233.8 549.4,234.1 550.2,234.3 551.0,234.5 551.8,234.8 552.5,235.1 553.3,235.3 554.1,235.6 554.9,235.9 555.7,236.2 556.5,236.5 557.2,236.8 558.0,237.1 558.8,237.4 559.6,237.7 560.4,238.0 561.1,238.3 561.9,238.6 562.7,238.9 563.5,239.2 564.3,239.5 565.0,239.8 565.8,240.1 566.6,240.4 567.4,240.7 568.1,240.9 568.9,241.2 569.7,241.5 570.5,241.7 571.3,242.0 572.1,242.2 572.8,242.5 573.6,242.7 574.4,242.9 575.2,243.1 576.0,243.3 576.8,243.5 577.6,243.6 578.4,243.8 579.1,243.9 579.9,244.0 580.7,244.2 581.5,244.2 582.3,244.3 583.1,244.4 583.9,244.4 584.7,244.5 585.5,244.5 586.3,244.5 587.1,244.5 587.9,244.4 588.7,244.4 589.5,244.3 590.3,244.3 591.1,244.2 591.9,244.1 592.7,244.0 593.5,243.8 594.3,243.7 595.1,243.5 595.9,243.4 596.7,243.2 597.4,243.0 598.2,242.8 599.0,242.6 599.8,242.3 600.6,242.1 601.4,241.9 602.1,241.6 602.9,241.4 603.7,241.1 604.5,240.8 605.3,240.5 606.1,240.2 606.8,239.9 607.6,239.6 608.4,239.3 609.2,239.0 609.9,238.7 610.7,238.4 611.5,238.1 612.3,237.7 613.0,237.4 613.8,237.1 614.6,236.8 615.4,236.4 616.1,236.1 616.9,235.8 617.7,235.4 618.5,235.1 619.3,234.8 620.0,234.5 620.8,234.1 621.6,233.8 622.4,233.5 623.1,233.2 623.9,232.9 624.7,232.6 625.5,232.3 626.3,232.0 627.0,231.7 627.8,231.4 628.6,231.1 629.4,230.9 630.2,230.6 631.0,230.4 631.7,230.1 632.5,229.9 633.3,229.7 634.1,229.4 634.9,229.2 635.7,229.0 636.5,228.8 637.3,228.7 638.1,228.5 638.8,228.3 639.6,228.2 640.4,228.0 641.2,227.9 642.0,227.7 642.8,227.6 643.6,227.5 644.4,227.4 645.2,227.3 646.0,227.2 646.8,227.1 647.6,227.0 648.4,226.9 649.2,226.9 650.0,226.8 650.8,226.8 651.6,226.7 652.4,226.7 653.2,226.7 654.0,226.6 654.8,226.6 655.6,226.6 656.4,226.6 657.2,226.6 658.0,226.6 658.8,226.7 659.6,226.7 660.4,226.7 661.2,226.8 662.0,226.8 662.8,226.9 663.6,226.9 664.4,227.0 665.2,227.1 666.0,227.2 666.8,227.2 667.6,227.3 668.4,227.4 669.2,227.5 670.0,227.6 670.8,227.8 671.6,227.9 672.4,228.0 673.2,228.2 674.0,228.3 674.8,228.4 675.6,228.6 676.4,228.8 677.2,228.9 678.0,229.1 678.7,229.3 679.5,229.4 680.3,229.6 681.1,229.8 681.9,230.0 682.7,230.2 683.5,230.4 684.3,230.7 685.1,230.9 685.9,231.1 686.7,231.3 687.5,231.6 688.2,231.8 689.0,232.0 689.8,232.3 690.6,232.5 691.4,232.8 692.2,233.0 693.0,233.3 693.7,233.6 694.5,233.8 695.3,234.1 696.1,234.3 696.9,234.6 697.7,234.9 698.4,235.1 699.2,235.4 700.0,235.7 700.8,235.9 701.6,236.2 702.3,236.4 703.1,236.7 703.9,236.9 704.7,237.2 705.5,237.4 706.2,237.7 707.0,237.9 707.8,238.1 708.6,238.4 709.4,238.6 710.1,238.8 710.9,239.0 711.7,239.2 712.5,239.4 713.3,239.6 714.0,239.8 714.8,240.0 715.6,240.1 716.4,240.3 717.2,240.5 718.0,240.6 718.7,240.7 719.5,240.9 720.3,241.0 721.1,241.1 721.9,241.2 722.7,241.2 723.4,241.3 724.2,241.4 725.0,241.4 725.8,241.5 726.6,241.5 727.4,241.5 728.2,241.5 729.0,241.5 729.8,241.5 730.5,241.4 731.3,241.4 732.1,241.3 732.9,241.3 733.7,241.2 734.5,241.1 735.3,241.0 736.1,240.9 736.9,240.8 737.7,240.7 738.5,240.6 739.3,240.4 740.1,240.3 740.9,240.1 741.7,240.0 742.5,239.8 743.3,239.7 744.1,239.5 744.9,239.3 745.7,239.1 746.5,238.9 747.3,238.7 748.1,238.5 748.9,238.3 749.7,238.1 750.5,237.9 751.3,237.6 752.1,237.4 752.9,237.2 753.7,236.9 754.5,236.7 755.3,236.4 756.1,236.2 756.9,235.9 757.7,235.7 758.5,235.4 759.3,235.2 760.1,234.9 760.9,234.7 761.7,234.4 762.5,234.1 763.3,233.9 764.1,233.6 764.9,233.3 765.7,233.1 766.5,232.8 767.3,232.5 768.1,232.3 768.9,232.0 769.7,231.7 770.5,231.5 771.3,231.2 772.1,231.0 772.9,230.7 773.7,230.4 774.5,230.2 775.3,229.9 776.1,229.7 776.9,229.4 777.7,229.2 778.5,229.0 779.4,228.7 780.2,228.5 781.0,228.3 781.8,228.0 782.6,227.8 783.4,227.6 784.2,227.4 785.0,227.2 785.8,227.0 786.6,226.8 787.4,226.6 788.2,226.4 789.0,226.3 789.8,226.1 790.6,225.9 791.3,225.8 792.1,225.6 792.9,225.5 793.7,225.4 794.5,225.3 795.3,225.1 796.1,225.0 796.9,224.9 797.7,224.9 798.5,224.8 799.3,224.7 800.1,224.7 800.9,224.6 801.7,224.6 802.5,224.5 803.3,224.5 804.1,224.5 804.8,224.5 805.6,224.6 806.4,224.6 807.2,224.6 808.0,224.7 808.8,224.7 809.6,224.8 810.4,224.9 811.1,225.0 811.9,225.1 812.7,225.3 813.5,225.4 814.3,225.5 815.1,225.7 815.8,225.9 816.6,226.0 817.4,226.2 818.2,226.4 819.0,226.6 819.7,226.8 820.5,227.1 821.3,227.3 822.1,227.5 822.9,227.8 823.6,228.0 824.4,228.3 825.2,228.5 826.0,228.8 826.8,229.1 827.5,229.3 828.3,229.6 829.1,229.9 829.9,230.2 830.6,230.5 831.4,230.8 832.2,231.1 833.0,231.4 833.7,231.7 834.5,232.0 835.3,232.3 836.1,232.6 836.9,232.9 837.6,233.2 838.4,233.5 839.2,233.8 840.0,234.1 840.7,234.4 841.5,234.7 842.3,235.0 843.1,235.3 843.9,235.6 844.6,235.9 845.4,236.2 846.2,236.5 847.0,236.8 847.8,237.0 848.5,237.3 849.3,237.6 850.1,237.8 850.9,238.1 851.7,238.3 852.5,238.6 853.2,238.8 854.0,239.1 854.8,239.3 855.6,239.5 856.4,239.7 857.2,239.9 858.0,240.1 858.7,240.3 859.5,240.5 860.3,240.6 861.1,240.8 861.9,240.9 862.7,241.1 863.5,241.2 864.3,241.3 865.1,241.4 865.9,241.5 866.7,241.5 867.5,241.6 868.3,241.7 869.1,241.7 869.9,241.7 870.7,241.7 871.5,241.7 872.3,241.7 873.1,241.6 873.9,241.6" fill="none" stroke="#000" stroke-width="5" stroke-linejoin="round" stroke-linecap="butt"/></svg>
</svg>
<div class="tick" style="left:309px;top:127px;width:40px;text-align:center">0.4</div><div class="tick" style="left:294px;top:141px;width:30px;text-align:right">0.4</div><div class="tick" style="left:361px;top:127px;width:40px;text-align:center">0.6</div><div class="tick" style="left:294px;top:193px;width:30px;text-align:right">0.6</div><div class="tick" style="left:413px;top:127px;width:40px;text-align:center">0.8</div><div class="tick" style="left:294px;top:244px;width:30px;text-align:right">0.8</div><div class="tick" style="left:465px;top:127px;width:40px;text-align:center">1</div><div class="tick" style="left:294px;top:296px;width:30px;text-align:right">1</div><div class="tick" style="left:516px;top:127px;width:40px;text-align:center">1.2</div><div class="tick" style="left:294px;top:347px;width:30px;text-align:right">1.2</div><div class="tick" style="left:568px;top:127px;width:40px;text-align:center">1.4</div><div class="tick" style="left:294px;top:399px;width:30px;text-align:right">1.4</div><div class="tick" style="left:620px;top:127px;width:40px;text-align:center">1.6</div><div class="tick" style="left:294px;top:450px;width:30px;text-align:right">1.6</div><div class="tick" style="left:671px;top:127px;width:40px;text-align:center">1.8</div><div class="tick" style="left:294px;top:502px;width:30px;text-align:right">1.8</div><div class="tick" style="left:723px;top:127px;width:40px;text-align:center">2</div><div class="tick" style="left:294px;top:553px;width:30px;text-align:right">2</div><div class="tick" style="left:775px;top:127px;width:40px;text-align:center">2.2</div><div class="tick" style="left:294px;top:605px;width:30px;text-align:right">2.2</div><div class="tick" style="left:827px;top:127px;width:40px;text-align:center">2.4</div><div class="tick" style="left:294px;top:656px;width:30px;text-align:right">2.4</div>
<div class="a" style="left:527px;top:103px;font-family:'Liberation Serif',serif;font-size:15.6px;letter-spacing:0.3px;white-space:nowrap;color:#262626">B-C bond distance (&#197;)</div>
<div class="a" style="left:217px;top:408px;width:147px;font-family:'Liberation Serif',serif;font-size:15.6px;letter-spacing:0.3px;white-space:nowrap;color:#262626;transform:rotate(-90deg);text-align:center">A-B bond distance (&#197;)</div>
</body></html>
